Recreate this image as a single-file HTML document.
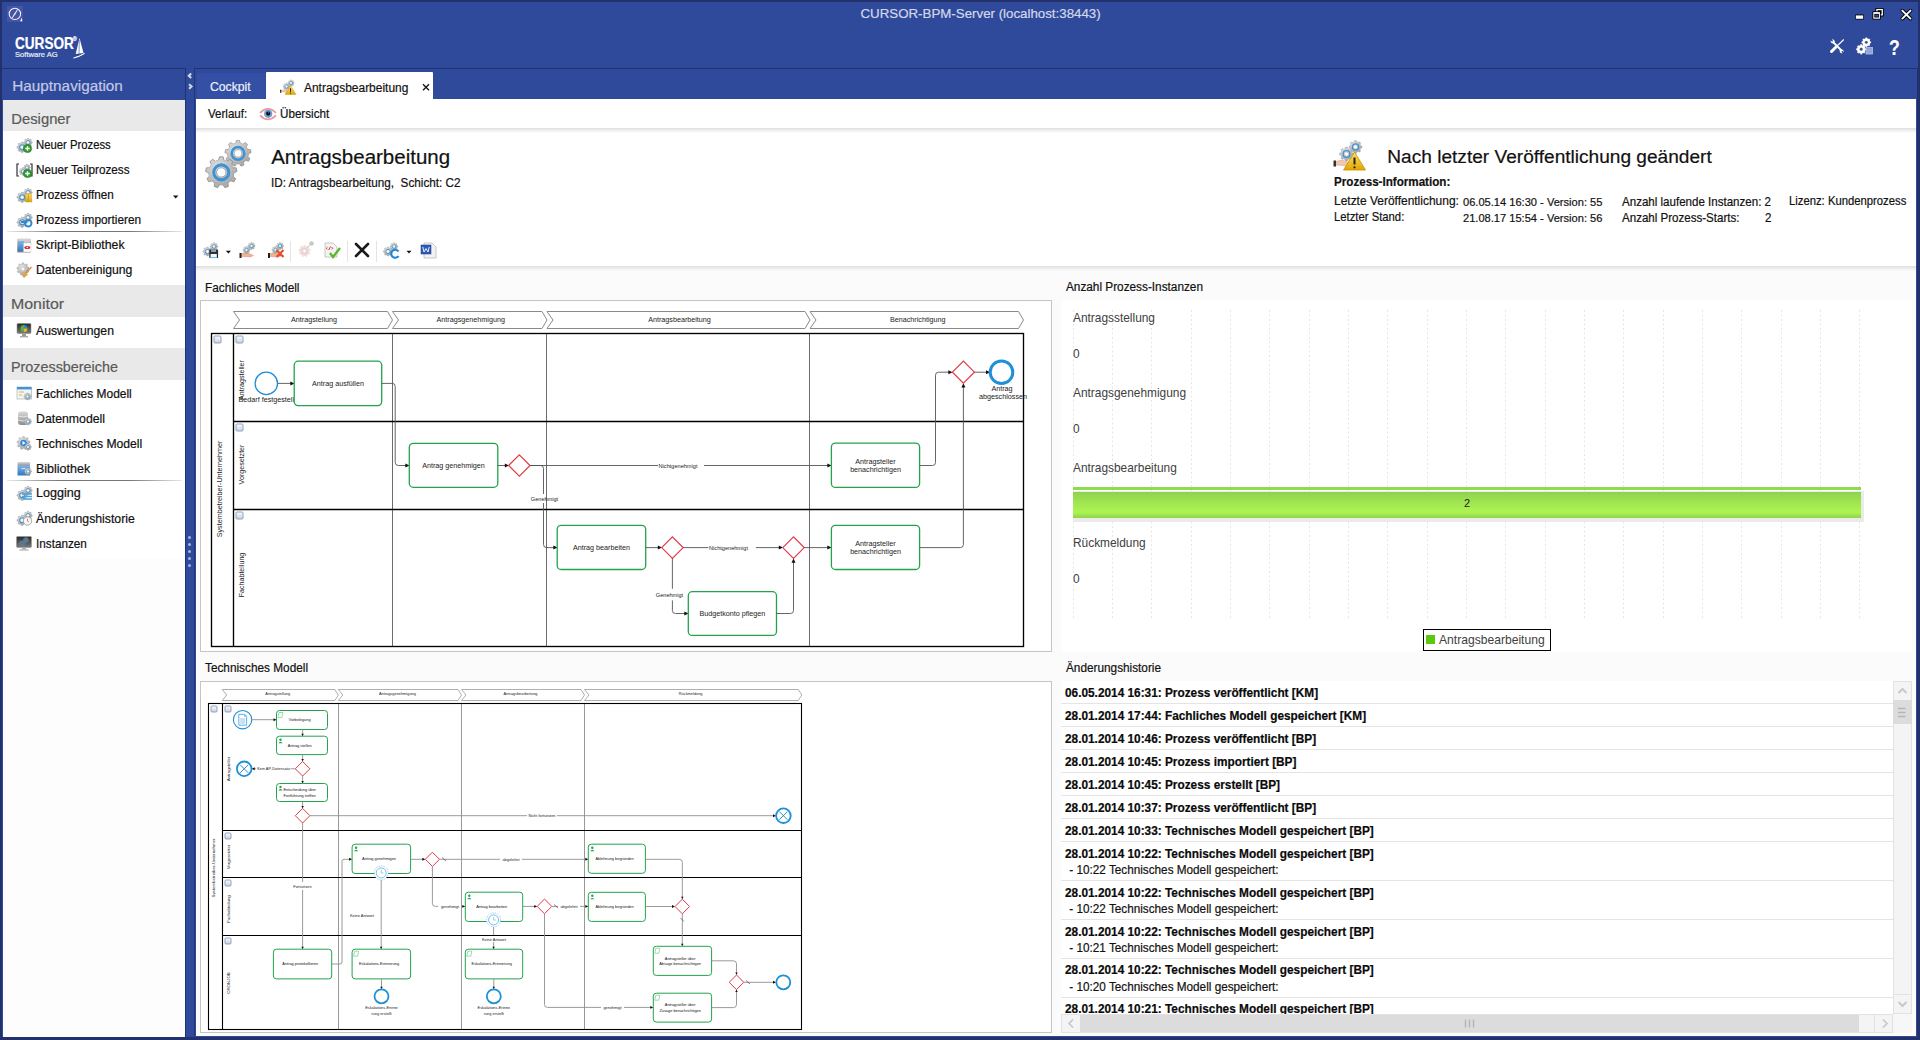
<!DOCTYPE html><html><head><meta charset="utf-8"><style>
html,body{margin:0;padding:0}
body{width:1920px;height:1040px;overflow:hidden;position:relative;background:#22316b;font-family:"Liberation Sans",sans-serif}
.t{position:absolute;white-space:pre;line-height:1;-webkit-text-stroke:0.2px currentColor}
.r{position:absolute}
svg{position:absolute;overflow:visible}
</style></head><body><div class="r" style="left:2px;top:2px;width:1916px;height:1035px;background:#2f4a9b"></div><div class="r" style="left:1917px;top:69px;width:3px;height:971px;background:#22316b"></div><div class="t" style="left:860.5px;top:6.64px;font-size:13.30px;color:#d3d8ea;font-weight:400;">CURSOR-BPM-Server (localhost:38443)</div><svg style="left:0;top:0" width="40" height="30"><rect x="7" y="6" width="16" height="16" fill="#4654a6"/><circle cx="14.9" cy="13.9" r="5.7" fill="none" stroke="#f4f4fa" stroke-width="1.05"/><path d="M12.2,18 Q14.2,13.4 17.6,9.6 Q15.6,14.2 12.2,18Z" fill="#fff" stroke="#fff" stroke-width="0.5"/><path d="M20.2,21.3 L22.4,21.3 L21.6,17.6Z" fill="#fff"/></svg><svg style="left:0;top:0" width="1920" height="30"><rect x="1855" y="14.6" width="9" height="5" rx="0.8" fill="#000"/><rect x="1855.8" y="15.4" width="7.4" height="3.4" fill="#fff"/><rect x="1875.4" y="8" width="8.4" height="8.4" rx="0.6" fill="#000"/><rect x="1876.3" y="8.9" width="6.6" height="6.6" fill="#fff"/><rect x="1877.6" y="10.2" width="4" height="4" fill="#000"/><rect x="1872.4" y="11.2" width="8.4" height="8.4" rx="0.6" fill="#000"/><rect x="1873.3" y="12.1" width="6.6" height="6.6" fill="#fff"/><rect x="1874.3" y="13.9" width="4.6" height="3.6" fill="#000"/><rect x="1875.1" y="14.7" width="3" height="2" fill="#2f4a9b"/><path d="M1902.3,10.6 L1910.5,18.6 M1910.5,10.6 L1902.3,18.6" stroke="#000" stroke-width="3.6" stroke-linecap="round"/><path d="M1902.3,10.6 L1910.5,18.6 M1910.5,10.6 L1902.3,18.6" stroke="#fff" stroke-width="1.9" stroke-linecap="round"/></svg><div class="t" style="left:14.5px;top:35.74px;font-size:15.90px;color:#fff;font-weight:700;transform:scaleX(0.8550);transform-origin:0 0;">CURSOR</div><div class="t" style="left:72.8px;top:36.84px;font-size:5.50px;color:#fff;font-weight:400;">®</div><div class="t" style="left:15.0px;top:51.47px;font-size:7.60px;color:#e8ebf5;font-weight:400;">Software AG</div><svg style="left:70px;top:35px" width="20" height="26"><path d="M9.5,3 L5.7,18.9 L13.5,18 Z" fill="#fff"/><path d="M9.3,5 L9,18.6" stroke="#2f4a9b" stroke-width="0.6"/><path d="M3.6,23 Q9,21.5 14.5,18.5 Q9,22 3.6,23Z" fill="#fff" stroke="#fff" stroke-width="0.8"/></svg><svg style="left:1826px;top:34px" width="80" height="24"><path d="M5.5,17.5 L9.5,13.5" stroke="#fff" stroke-width="3" stroke-linecap="round"/><path d="M9,14 L17.8,5.5" stroke="#fff" stroke-width="1.1"/><path d="M7,8 L15.5,16.5" stroke="#fff" stroke-width="1.8"/><path d="M4.5,6.5 Q4.5,9.5 7.5,9.5 L8.8,8.2 Q8.8,5.2 5.8,5.2 L7,6.8 L6.2,7.8Z" fill="#fff"/><path d="M17.8,18.2 Q17.8,15.2 14.8,15.2 L13.6,16.4 Q13.6,19.4 16.6,19.4 L15.4,17.8 L16.2,16.8Z" fill="#fff"/></svg><svg style="left:0;top:0" width="1920" height="80"><path d="M1865.44,38.72L1865.69,37.74L1866.91,37.74L1867.16,38.72L1868.22,39.16L1869.09,38.64L1869.96,39.51L1869.44,40.38L1869.88,41.44L1870.86,41.69L1870.86,42.91L1869.88,43.16L1869.44,44.22L1869.96,45.09L1869.09,45.96L1868.22,45.44L1867.16,45.88L1866.91,46.86L1865.69,46.86L1865.44,45.88L1864.38,45.44L1863.51,45.96L1862.64,45.09L1863.16,44.22L1862.72,43.16L1861.74,42.91L1861.74,41.69L1862.72,41.44L1863.16,40.38L1862.64,39.51L1863.51,38.64L1864.38,39.16Z" fill="#fff" stroke="#fff" stroke-width="0.35"/><circle cx="1866.30" cy="42.30" r="3.68" fill="#fff"/><circle cx="1866.30" cy="42.30" r="1.38" fill="#2f4a9b" stroke="#9a9a9a" stroke-width="0.28"/><path d="M1860.28,45.49L1860.55,44.44L1861.85,44.44L1862.12,45.49L1863.25,45.96L1864.17,45.40L1865.10,46.33L1864.54,47.25L1865.01,48.38L1866.06,48.65L1866.06,49.95L1865.01,50.22L1864.54,51.35L1865.10,52.27L1864.17,53.20L1863.25,52.64L1862.12,53.11L1861.85,54.16L1860.55,54.16L1860.28,53.11L1859.15,52.64L1858.23,53.20L1857.30,52.27L1857.86,51.35L1857.39,50.22L1856.34,49.95L1856.34,48.65L1857.39,48.38L1857.86,47.25L1857.30,46.33L1858.23,45.40L1859.15,45.96Z" fill="#fff" stroke="#fff" stroke-width="0.35"/><circle cx="1861.20" cy="49.30" r="3.92" fill="#fff"/><circle cx="1861.20" cy="49.30" r="1.47" fill="#2f4a9b" stroke="#9a9a9a" stroke-width="0.29"/><rect x="1866" y="47.5" width="6.5" height="6.5" fill="#8f9ed6" stroke="#c5cdee" stroke-width="0.7"/><path d="M1867,50 L1871.5,50 M1867,52 L1871.5,52" stroke="#aab5e2" stroke-width="0.6"/></svg><div class="t" style="left:1888.6px;top:36.58px;font-size:22.00px;color:#fff;font-weight:700;transform:scaleX(0.8000);transform-origin:0 0;">?</div><div class="r" style="left:2px;top:68px;width:184px;height:1px;background:#22336e"></div><div class="r" style="left:194px;top:68px;width:1724px;height:1px;background:#22336e"></div><div class="r" style="left:3px;top:69px;width:182px;height:968px;background:#fdfdfd"></div><div class="r" style="left:3px;top:69px;width:182px;height:31px;background:#2f4a9b"></div><div class="r" style="left:185px;top:69px;width:1px;height:968px;background:#1f3272"></div><div class="t" style="left:12.3px;top:77.95px;font-size:15.30px;color:#c3c9e6;font-weight:400;">Hauptnavigation</div><div class="r" style="left:3px;top:100px;width:182px;height:458px;background:#fff"></div><div class="r" style="left:3px;top:100px;width:182px;height:31px;background:#e9e9e9"></div><div class="t" style="left:11.3px;top:112.07px;font-size:14.80px;color:#595959;font-weight:400;">Designer</div><div class="r" style="left:3px;top:285px;width:182px;height:32px;background:#e9e9e9"></div><div class="t" style="left:11.3px;top:296.97px;font-size:14.80px;color:#595959;font-weight:400;transform:scaleX(1.0750);transform-origin:0 0;">Monitor</div><div class="r" style="left:3px;top:348px;width:182px;height:32px;background:#e9e9e9"></div><div class="t" style="left:11.3px;top:360.07px;font-size:14.80px;color:#595959;font-weight:400;transform:scaleX(0.9700);transform-origin:0 0;">Prozessbereiche</div><div class="t" style="left:35.8px;top:139.30px;font-size:12.29px;color:#111;font-weight:400;transform:scaleX(0.9204);transform-origin:0 0;">Neuer Prozess</div><div class="t" style="left:35.8px;top:164.40px;font-size:12.29px;color:#111;font-weight:400;transform:scaleX(0.9536);transform-origin:0 0;">Neuer Teilprozess</div><div class="t" style="left:35.8px;top:189.40px;font-size:12.29px;color:#111;font-weight:400;transform:scaleX(0.9526);transform-origin:0 0;">Prozess öffnen</div><div class="t" style="left:35.8px;top:214.40px;font-size:12.29px;color:#111;font-weight:400;transform:scaleX(0.9621);transform-origin:0 0;">Prozess importieren</div><div class="t" style="left:35.8px;top:239.40px;font-size:12.29px;color:#111;font-weight:400;">Skript-Bibliothek</div><div class="t" style="left:35.8px;top:264.30px;font-size:12.29px;color:#111;font-weight:400;transform:scaleX(0.9943);transform-origin:0 0;">Datenbereinigung</div><div class="t" style="left:35.8px;top:324.70px;font-size:12.29px;color:#111;font-weight:400;transform:scaleX(0.9924);transform-origin:0 0;">Auswertungen</div><div class="t" style="left:35.8px;top:387.90px;font-size:12.29px;color:#111;font-weight:400;transform:scaleX(0.9744);transform-origin:0 0;">Fachliches Modell</div><div class="t" style="left:35.8px;top:412.50px;font-size:12.29px;color:#111;font-weight:400;transform:scaleX(1.0009);transform-origin:0 0;">Datenmodell</div><div class="t" style="left:35.8px;top:437.50px;font-size:12.29px;color:#111;font-weight:400;transform:scaleX(0.9915);transform-origin:0 0;">Technisches Modell</div><div class="t" style="left:35.8px;top:462.50px;font-size:12.29px;color:#111;font-weight:400;transform:scaleX(1.0171);transform-origin:0 0;">Bibliothek</div><div class="t" style="left:35.8px;top:487.40px;font-size:12.29px;color:#111;font-weight:400;transform:scaleX(1.0237);transform-origin:0 0;">Logging</div><div class="t" style="left:35.8px;top:512.50px;font-size:12.29px;color:#111;font-weight:400;transform:scaleX(0.9981);transform-origin:0 0;">Änderungshistorie</div><div class="t" style="left:35.8px;top:537.50px;font-size:12.29px;color:#111;font-weight:400;transform:scaleX(0.9555);transform-origin:0 0;">Instanzen</div><div class="r" style="left:7px;top:231px;width:175px;height:1px;background:linear-gradient(90deg,rgba(140,140,140,0.2),#777 30%,#777 70%,rgba(140,140,140,0.2))"></div><div class="r" style="left:7px;top:480px;width:175px;height:1px;background:linear-gradient(90deg,rgba(140,140,140,0.2),#777 30%,#777 70%,rgba(140,140,140,0.2))"></div><svg style="left:170px;top:192px" width="10" height="10"><path d="M3,3.6 L8.4,3.6 L5.7,6.6Z" fill="#111"/></svg><svg style="left:182px;top:66px" width="18" height="30"><path d="M9.2,7.5 L6.8,9.7 L9.2,12" stroke="#d3d6e6" stroke-width="2.1" fill="none" stroke-linejoin="miter"/><path d="M7.1,18.2 L9.5,20.5 L7.1,22.8" stroke="#d3d6e6" stroke-width="2.1" fill="none"/></svg><div class="r" style="left:187.6px;top:536.0px;width:3px;height:3px;border-radius:50%;background:#aab3da"></div><div class="r" style="left:187.6px;top:543.1px;width:3px;height:3px;border-radius:50%;background:#aab3da"></div><div class="r" style="left:187.6px;top:550.2px;width:3px;height:3px;border-radius:50%;background:#aab3da"></div><div class="r" style="left:187.6px;top:557.3px;width:3px;height:3px;border-radius:50%;background:#aab3da"></div><div class="r" style="left:187.6px;top:564.4px;width:3px;height:3px;border-radius:50%;background:#aab3da"></div><div class="r" style="left:194px;top:69px;width:1px;height:968px;background:#24367a"></div><div class="r" style="left:197px;top:73px;width:68px;height:26px;background:#3350a5"></div><div class="t" style="left:210.3px;top:81.30px;font-size:12.87px;color:#eef1fa;font-weight:400;transform:scaleX(0.9479);transform-origin:0 0;">Cockpit</div><div class="r" style="left:266px;top:72px;width:167px;height:27px;background:#fff;border-radius:1px 1px 0 0"></div><div class="t" style="left:304.4px;top:82.03px;font-size:12.61px;color:#111;font-weight:400;transform:scaleX(0.9479);transform-origin:0 0;">Antragsbearbeitung</div><svg style="left:420px;top:81px" width="12" height="12"><path d="M3,3.3 L9,9.3 M9,3.3 L3,9.3" stroke="#111" stroke-width="1.3"/></svg><div class="r" style="left:196px;top:99px;width:1720px;height:937px;background:#fbfbfb"></div><div class="r" style="left:196px;top:99px;width:1720px;height:29px;background:#fff"></div><div class="r" style="left:196px;top:128px;width:1720px;height:5px;background:linear-gradient(#dedede,#e8e8e8 25%,#fff)"></div><div class="t" style="left:208.2px;top:108.48px;font-size:12.20px;color:#111;font-weight:400;transform:scaleX(0.9479);transform-origin:0 0;">Verlauf:</div><div class="t" style="left:280.3px;top:108.40px;font-size:12.29px;color:#111;font-weight:400;transform:scaleX(0.9479);transform-origin:0 0;">Übersicht</div><div class="r" style="left:196px;top:133px;width:1720px;height:133px;background:#fff"></div><div class="r" style="left:196px;top:266px;width:1720px;height:5px;background:linear-gradient(#dedede,#e6e6e6 25%,#fbfbfb)"></div><div class="t" style="left:271.2px;top:146.75px;font-size:20.50px;color:#111;font-weight:400;">Antragsbearbeitung</div><div class="t" style="left:271.2px;top:176.53px;font-size:12.36px;color:#111;font-weight:400;transform:scaleX(0.9479);transform-origin:0 0;">ID: Antragsbearbeitung,  Schicht: C2</div><div class="t" style="left:1387.3px;top:146.93px;font-size:19.10px;color:#111;font-weight:400;">Nach letzter Veröffentlichung geändert</div><div class="t" style="left:1334.2px;top:176.20px;font-size:12.28px;color:#111;font-weight:700;transform:scaleX(0.9479);transform-origin:0 0;">Prozess-Information:</div><div class="t" style="left:1334.2px;top:195.30px;font-size:12.64px;color:#111;font-weight:400;transform:scaleX(0.9479);transform-origin:0 0;">Letzte Veröffentlichung:</div><div class="t" style="left:1463.0px;top:196.09px;font-size:11.71px;color:#111;font-weight:400;transform:scaleX(0.9479);transform-origin:0 0;">06.05.14 16:30 - Version: 55</div><div class="t" style="left:1334.2px;top:212.01px;font-size:11.92px;color:#111;font-weight:400;transform:scaleX(0.9479);transform-origin:0 0;">Letzter Stand:</div><div class="t" style="left:1463.0px;top:212.19px;font-size:11.71px;color:#111;font-weight:400;transform:scaleX(0.9479);transform-origin:0 0;">21.08.17 15:54 - Version: 56</div><div class="t" style="left:1621.5px;top:195.69px;font-size:12.19px;color:#111;font-weight:400;transform:scaleX(0.9479);transform-origin:0 0;">Anzahl laufende Instanzen: 2</div><div class="t" style="left:1621.5px;top:211.79px;font-size:12.19px;color:#111;font-weight:400;transform:scaleX(0.9479);transform-origin:0 0;">Anzahl Prozess-Starts:</div><div class="t" style="left:1764.8px;top:211.79px;font-size:12.19px;color:#111;font-weight:400;transform:scaleX(0.9479);transform-origin:0 0;">2</div><div class="t" style="left:1789.1px;top:195.92px;font-size:11.91px;color:#111;font-weight:400;transform:scaleX(0.9479);transform-origin:0 0;">Lizenz: Kundenprozess</div><div class="t" style="left:205.0px;top:281.55px;font-size:12.46px;color:#111;font-weight:400;transform:scaleX(0.9479);transform-origin:0 0;">Fachliches Modell</div><div class="t" style="left:1066.0px;top:281.16px;font-size:12.45px;color:#111;font-weight:400;transform:scaleX(0.9479);transform-origin:0 0;">Anzahl Prozess-Instanzen</div><div class="t" style="left:205.0px;top:662.15px;font-size:12.46px;color:#111;font-weight:400;transform:scaleX(0.9479);transform-origin:0 0;">Technisches Modell</div><div class="t" style="left:1066.0px;top:662.16px;font-size:12.45px;color:#111;font-weight:400;transform:scaleX(0.9479);transform-origin:0 0;">Änderungshistorie</div><svg style="left:0;top:0" width="1920" height="1040" font-family="Liberation Sans"><defs><linearGradient id="cbg" x1="0" y1="0" x2="0" y2="1"><stop offset="0" stop-color="#fdfdfe"/><stop offset="1" stop-color="#c6d0e2"/></linearGradient></defs><rect x="200.5" y="300.5" width="851" height="351" fill="#fff" stroke="#c4c4c4" stroke-width="1"/><path d="M233.5,311.5 L387.5,311.5 L392.5,320.0 L387.5,328.5 L233.5,328.5 L239.5,320.0Z" fill="#fff" stroke="#8a8a8a" stroke-width="1"/><text x="314.0" y="321.71999999999997" font-size="7.2" text-anchor="middle" fill="#222" >Antragstellung</text><path d="M392.5,311.5 L542,311.5 L547,320.0 L542,328.5 L392.5,328.5 L398.5,320.0Z" fill="#fff" stroke="#8a8a8a" stroke-width="1"/><text x="470.75" y="321.71999999999997" font-size="7.2" text-anchor="middle" fill="#222" >Antragsgenehmigung</text><path d="M547,311.5 L805,311.5 L810,320.0 L805,328.5 L547,328.5 L553,320.0Z" fill="#fff" stroke="#8a8a8a" stroke-width="1"/><text x="679.5" y="321.71999999999997" font-size="7.2" text-anchor="middle" fill="#222" >Antragsbearbeitung</text><path d="M810,311.5 L1018.5,311.5 L1023.5,320.0 L1018.5,328.5 L810,328.5 L816,320.0Z" fill="#fff" stroke="#8a8a8a" stroke-width="1"/><text x="917.75" y="321.71999999999997" font-size="7.2" text-anchor="middle" fill="#222" >Benachrichtigung</text><path d="M392.5,333.5 L392.5,646.5" fill="none" stroke="#6b6b6b" stroke-width="1"/><path d="M546.5,333.5 L546.5,646.5" fill="none" stroke="#6b6b6b" stroke-width="1"/><path d="M809.5,333.5 L809.5,646.5" fill="none" stroke="#6b6b6b" stroke-width="1"/><rect x="211.5" y="333.5" width="812" height="313" fill="none" stroke="#000" stroke-width="1.35"/><path d="M233.5,333.5 L233.5,646.5" fill="none" stroke="#000" stroke-width="1.35"/><path d="M233.5,421.5 L1023.5,421.5 M233.5,509.5 L1023.5,509.5" fill="none" stroke="#000" stroke-width="1.35"/><rect x="214.0" y="336.0" width="7" height="7" rx="1" fill="url(#cbg)" stroke="#7d8fae" stroke-width="0.8"/><rect x="236.0" y="336.0" width="7" height="7" rx="1" fill="url(#cbg)" stroke="#7d8fae" stroke-width="0.8"/><rect x="236.0" y="424.0" width="7" height="7" rx="1" fill="url(#cbg)" stroke="#7d8fae" stroke-width="0.8"/><rect x="236.0" y="512.0" width="7" height="7" rx="1" fill="url(#cbg)" stroke="#7d8fae" stroke-width="0.8"/><text x="0" y="0" font-size="7.2" text-anchor="middle" fill="#222" transform="translate(219.8,489) rotate(-90)" dominant-baseline="central">Systembetreiber-Unternehmer</text><text x="0" y="0" font-size="7.1" text-anchor="middle" fill="#222" transform="translate(241.5,380) rotate(-90)" dominant-baseline="central">Antragsteller</text><text x="0" y="0" font-size="7.1" text-anchor="middle" fill="#222" transform="translate(241.5,464.5) rotate(-90)" dominant-baseline="central">Vorgesetzter</text><text x="0" y="0" font-size="7.1" text-anchor="middle" fill="#222" transform="translate(241.5,575) rotate(-90)" dominant-baseline="central">Fachabteilung</text><circle cx="266.3" cy="383.4" r="11.2" fill="#fff" stroke="#1f8fd8" stroke-width="1.3"/><text x="238.5" y="402" font-size="7.2" text-anchor="start" fill="#222" >Bedarf festgestell</text><path d="M277.5,383.4 L292,383.4" fill="none" stroke="#555" stroke-width="0.9"/><path d="M294.5,383.4 L290.3,381.38399999999996 L290.3,385.416Z" fill="#111"/><rect x="294.2" y="361.2" width="87.50" height="44.40" rx="4" fill="#fff" stroke="#22a34e" stroke-width="1.3"/><text x="338" y="385.8" font-size="7.2" text-anchor="middle" fill="#222" >Antrag ausfüllen</text><path d="M381.7,383.4 L392.5,383.4 Q395.2,383.4 395.2,386.5 L395.2,462.5 Q395.2,465.5 398.5,465.5 L407,465.5" fill="none" stroke="#555" stroke-width="0.9"/><path d="M409.5,465.5 L405.3,463.484 L405.3,467.516Z" fill="#111"/><rect x="409.3" y="443.3" width="88.50" height="44.00" rx="4" fill="#fff" stroke="#22a34e" stroke-width="1.3"/><text x="453.5" y="467.9" font-size="7.2" text-anchor="middle" fill="#222" >Antrag genehmigen</text><path d="M497.8,465.5 L506.5,465.5" fill="none" stroke="#555" stroke-width="0.9"/><path d="M509,465.5 L504.8,463.484 L504.8,467.516Z" fill="#111"/><path d="M508.59999999999997,465.5 L519.3,454.8 L530.0,465.5 L519.3,476.2Z" fill="#fff" stroke="#e23a44" stroke-width="1.2"/><path d="M530,465.5 L658,465.5 M704,465.5 L829,465.5" fill="none" stroke="#555" stroke-width="0.9"/><path d="M831.5,465.5 L827.3,463.484 L827.3,467.516Z" fill="#111"/><text x="678" y="467.5" font-size="5.6" text-anchor="middle" fill="#222" >Nichtgenehmigt</text><path d="M530,465.5 L540.5,465.5 Q543.5,465.5 543.5,468.5 L543.5,494 M543.5,503 L543.5,544.5 Q543.5,547.6 546.5,547.6 L555,547.6" fill="none" stroke="#555" stroke-width="0.9"/><path d="M557.5,547.6 L553.3,545.5840000000001 L553.3,549.616Z" fill="#111"/><text x="544.5" y="501" font-size="5.6" text-anchor="middle" fill="#222" >Genehmigt</text><rect x="557.2" y="525.3" width="88.50" height="44.20" rx="4" fill="#fff" stroke="#22a34e" stroke-width="1.3"/><text x="601.5" y="550" font-size="7.2" text-anchor="middle" fill="#222" >Antrag bearbeiten</text><path d="M645.7,547.6 L659.5,547.6" fill="none" stroke="#555" stroke-width="0.9"/><path d="M662,547.6 L657.8,545.5840000000001 L657.8,549.616Z" fill="#111"/><path d="M661.6999999999999,547.6 L672.4,536.9 L683.1,547.6 L672.4,558.3000000000001Z" fill="#fff" stroke="#e23a44" stroke-width="1.2"/><path d="M683.1,547.6 L708.4,547.6 M755.8,547.6 L780.5,547.6" fill="none" stroke="#555" stroke-width="0.9"/><path d="M783,547.6 L778.8,545.5840000000001 L778.8,549.616Z" fill="#111"/><text x="728.5" y="549.6" font-size="5.6" text-anchor="middle" fill="#222" >Nichtgenehmigt</text><path d="M672.4,558.3 L672.4,588.8 M672.4,600.4 L672.4,610.5 Q672.4,613.5 675.5,613.5 L686,613.5" fill="none" stroke="#555" stroke-width="0.9"/><path d="M688.5,613.5 L684.3,611.484 L684.3,615.516Z" fill="#111"/><text x="669.5" y="597" font-size="5.6" text-anchor="middle" fill="#222" >Genehmigt</text><rect x="688.3" y="591.7" width="88.20" height="43.70" rx="4" fill="#fff" stroke="#22a34e" stroke-width="1.3"/><text x="732.4" y="616" font-size="7.2" text-anchor="middle" fill="#222" >Budgetkonto pflegen</text><path d="M776.5,613.5 L790.5,613.5 Q793.5,613.5 793.5,610.5 L793.5,562" fill="none" stroke="#555" stroke-width="0.9"/><path d="M793.5,558.5 L791.484,562.7 L795.516,562.7Z" fill="#111"/><path d="M782.8,547.6 L793.5,536.9 L804.2,547.6 L793.5,558.3000000000001Z" fill="#fff" stroke="#e23a44" stroke-width="1.2"/><path d="M804.2,547.6 L829,547.6" fill="none" stroke="#555" stroke-width="0.9"/><path d="M831.5,547.6 L827.3,545.5840000000001 L827.3,549.616Z" fill="#111"/><rect x="831.4" y="525.3" width="88.20" height="44.20" rx="4" fill="#fff" stroke="#22a34e" stroke-width="1.3"/><text x="875.5" y="546" font-size="7.2" text-anchor="middle" fill="#222" >Antragsteller</text><text x="875.5" y="554.2" font-size="7.2" text-anchor="middle" fill="#222" >benachrichtigen</text><rect x="831.4" y="443.1" width="88.20" height="44.30" rx="4" fill="#fff" stroke="#22a34e" stroke-width="1.3"/><text x="875.5" y="463.8" font-size="7.2" text-anchor="middle" fill="#222" >Antragsteller</text><text x="875.5" y="472" font-size="7.2" text-anchor="middle" fill="#222" >benachrichtigen</text><path d="M919.6,547.6 L960.4,547.6 Q963.4,547.6 963.4,544.5 L963.4,387" fill="none" stroke="#555" stroke-width="0.9"/><path d="M963.4,383.3 L961.384,387.5 L965.4159999999999,387.5Z" fill="#111"/><path d="M919.6,465.5 L932.5,465.5 Q935.5,465.5 935.5,462.5 L935.5,375.2 Q935.5,372.2 938.5,372.2 L950,372.2" fill="none" stroke="#555" stroke-width="0.9"/><path d="M952.5,372.2 L948.3,370.18399999999997 L948.3,374.216Z" fill="#111"/><path d="M952.4,372.2 L963.4,361.2 L974.4,372.2 L963.4,383.2Z" fill="#fff" stroke="#e23a44" stroke-width="1.2"/><path d="M974.4,372.2 L987.5,372.2" fill="none" stroke="#555" stroke-width="0.9"/><path d="M990.2,372.2 L986.0,370.18399999999997 L986.0,374.216Z" fill="#111"/><circle cx="1001.5" cy="372.2" r="11.3" fill="#fff" stroke="#1f8fd8" stroke-width="3"/><text x="1002" y="390.6" font-size="7.2" text-anchor="middle" fill="#222" >Antrag</text><text x="1003" y="398.5" font-size="7.2" text-anchor="middle" fill="#222" >abgeschlossen</text><rect x="200.5" y="681.5" width="851" height="351" fill="#fff" stroke="#c4c4c4" stroke-width="1"/><path d="M222.2,689.5 L334.8,689.5 L338.3,695.0 L334.8,700.5 L222.2,700.5 L226.7,695.0Z" fill="#fff" stroke="#9a9a9a" stroke-width="0.8"/><text x="277.75" y="695.365" font-size="3.9" text-anchor="middle" fill="#222" >Antragstellung</text><path d="M338.3,689.5 L458.0,689.5 L461.5,695.0 L458.0,700.5 L338.3,700.5 L342.8,695.0Z" fill="#fff" stroke="#9a9a9a" stroke-width="0.8"/><text x="397.4" y="695.365" font-size="3.9" text-anchor="middle" fill="#222" >Antragsgenehmigung</text><path d="M461.5,689.5 L581.0,689.5 L584.5,695.0 L581.0,700.5 L461.5,700.5 L466.0,695.0Z" fill="#fff" stroke="#9a9a9a" stroke-width="0.8"/><text x="520.5" y="695.365" font-size="3.9" text-anchor="middle" fill="#222" >Antragsbearbeitung</text><path d="M584.5,689.5 L798.3,689.5 L801.8,695.0 L798.3,700.5 L584.5,700.5 L589.0,695.0Z" fill="#fff" stroke="#9a9a9a" stroke-width="0.8"/><text x="690.65" y="695.365" font-size="3.9" text-anchor="middle" fill="#222" >Rückmeldung</text><path d="M338.5,703.5 L338.5,1029.5" fill="none" stroke="#8c8c8c" stroke-width="0.9"/><path d="M461.5,703.5 L461.5,1029.5" fill="none" stroke="#8c8c8c" stroke-width="0.9"/><path d="M584.5,703.5 L584.5,1029.5" fill="none" stroke="#8c8c8c" stroke-width="0.9"/><rect x="208.5" y="703.5" width="593" height="326" fill="none" stroke="#000" stroke-width="1.1"/><path d="M222.5,703.5 L222.5,1029.5" fill="none" stroke="#000" stroke-width="1.1"/><path d="M222.5,830.5 L801.5,830.5 M222.5,877.5 L801.5,877.5 M222.5,935.5 L801.5,935.5" fill="none" stroke="#000" stroke-width="1.1"/><rect x="211.0" y="706.0" width="6" height="6" rx="1" fill="url(#cbg)" stroke="#7d8fae" stroke-width="0.8"/><rect x="225.0" y="706.0" width="6" height="6" rx="1" fill="url(#cbg)" stroke="#7d8fae" stroke-width="0.8"/><rect x="225.0" y="833.0" width="6" height="6" rx="1" fill="url(#cbg)" stroke="#7d8fae" stroke-width="0.8"/><rect x="225.0" y="880.0" width="6" height="6" rx="1" fill="url(#cbg)" stroke="#7d8fae" stroke-width="0.8"/><rect x="225.0" y="938.0" width="6" height="6" rx="1" fill="url(#cbg)" stroke="#7d8fae" stroke-width="0.8"/><text x="0" y="0" font-size="4.4" text-anchor="middle" fill="#222" transform="translate(213,868) rotate(-90)" dominant-baseline="central">Systembetreiber-Unternehmer</text><text x="0" y="0" font-size="4.4" text-anchor="middle" fill="#222" transform="translate(228,769) rotate(-90)" dominant-baseline="central">Antragsteller</text><text x="0" y="0" font-size="4.4" text-anchor="middle" fill="#222" transform="translate(228,857) rotate(-90)" dominant-baseline="central">Vorgesetzter</text><text x="0" y="0" font-size="4.4" text-anchor="middle" fill="#222" transform="translate(228,909) rotate(-90)" dominant-baseline="central">Fachabteilung</text><text x="0" y="0" font-size="4.4" text-anchor="middle" fill="#222" transform="translate(228,983) rotate(-90)" dominant-baseline="central">CRONJOB</text><circle cx="242.6" cy="719.7" r="9.2" fill="#fff" stroke="#1f8fd8" stroke-width="1.1"/><path d="M238.8,714.3 L244.6,714.3 L246.6,716.3 L246.6,725.2 L238.8,725.2Z" fill="#fff" stroke="#3a9ae0" stroke-width="0.8"/><path d="M244.3,714.5 L244.3,716.6 L246.4,716.6Z" fill="#3a9ae0"/><path d="M240.2,719 L245.2,719 M240.2,721 L245.2,721 M240.2,723 L245.2,723" stroke="#3a9ae0" stroke-width="0.6"/><rect x="276.5" y="710.5" width="51.00" height="19.00" rx="3" fill="#fff" stroke="#22a34e" stroke-width="1.0"/><text x="299.7" y="721.2" font-size="3.9" text-anchor="middle" fill="#111" >Vorbelegung</text><path d="M279.0,712.5 L283.0,712.5 L282.0,717.5 L278.0,717.5Z" fill="none" stroke="#5cc27c" stroke-width="0.6"/><path d="M251.8,719.7 L274.5,719.7" fill="none" stroke="#8f8f8f" stroke-width="0.9"/><path d="M276.5,719.7 L273.5,718.26 L273.5,721.1400000000001Z" fill="#111"/><rect x="276.5" y="736.2" width="51.00" height="18.40" rx="3" fill="#fff" stroke="#22a34e" stroke-width="1.0"/><text x="299.7" y="746.6000000000001" font-size="3.9" text-anchor="middle" fill="#111" >Antrag stellen</text><circle cx="280.5" cy="739.7" r="1.2" fill="#22a34e"/><path d="M278.5,743.2 Q280.5,740.4000000000001 282.5,743.2Z" fill="#22a34e"/><path d="M302.6,729.5 L302.6,734.5" fill="none" stroke="#8f8f8f" stroke-width="0.9"/><path d="M302.6,736.2 L301.40000000000003,733.7 L303.8,733.7Z" fill="#111"/><path d="M302.6,754.6 L302.6,759.5" fill="none" stroke="#8f8f8f" stroke-width="0.9"/><path d="M302.6,761.5 L301.40000000000003,759.0 L303.8,759.0Z" fill="#111"/><path d="M295.3,768.8 L302.6,761.5 L309.90000000000003,768.8 L302.6,776.0999999999999Z" fill="#fff" stroke="#e23a44" stroke-width="1.0"/><path d="M295.3,768.8 L290.5,768.8 M251.5,768.8 L256,768.8" fill="none" stroke="#8f8f8f" stroke-width="0.9"/><path d="M251.7,768.8 L254.7,767.3599999999999 L254.7,770.24Z" fill="#111"/><text x="273.5" y="770.3" font-size="3.9" text-anchor="middle" fill="#222" >Kein AP-Datensatz</text><circle cx="244.2" cy="768.8" r="7.3" fill="#fff" stroke="#1f8fd8" stroke-width="1.8"/><path d="M240.2,764.8 L248.2,772.8 M248.2,764.8 L240.2,772.8" fill="none" stroke="#1f8fd8" stroke-width="1.0"/><path d="M302.6,776.1 L302.6,781.5" fill="none" stroke="#8f8f8f" stroke-width="0.9"/><path d="M302.6,783.5 L301.40000000000003,781.0 L303.8,781.0Z" fill="#111"/><rect x="276.5" y="783.5" width="51.00" height="18.00" rx="3" fill="#fff" stroke="#22a34e" stroke-width="1.0"/><text x="299.7" y="791.2" font-size="3.9" text-anchor="middle" fill="#111" >Entscheidung über</text><text x="299.7" y="796.8" font-size="3.9" text-anchor="middle" fill="#111" >Fortführung treffen</text><circle cx="280.5" cy="787.0" r="1.2" fill="#22a34e"/><path d="M278.5,790.5 Q280.5,787.7 282.5,790.5Z" fill="#22a34e"/><path d="M302.6,801.5 L302.6,806.5" fill="none" stroke="#8f8f8f" stroke-width="0.9"/><path d="M302.6,808.4 L301.40000000000003,805.9 L303.8,805.9Z" fill="#111"/><path d="M295.3,815.7 L302.6,808.4000000000001 L309.90000000000003,815.7 L302.6,823.0Z" fill="#fff" stroke="#e23a44" stroke-width="1.0"/><path d="M309.9,815.7 L527,815.7 M557,815.7 L774,815.7" fill="none" stroke="#8f8f8f" stroke-width="0.9"/><path d="M776,815.7 L773,814.26 L773,817.1400000000001Z" fill="#111"/><text x="542" y="817.3" font-size="3.9" text-anchor="middle" fill="#222" >Nicht fortsetzen</text><circle cx="783.4" cy="815.7" r="7.3" fill="#fff" stroke="#1f8fd8" stroke-width="1.8"/><path d="M779.4,811.7 L787.4,819.7 M787.4,811.7 L779.4,819.7" fill="none" stroke="#1f8fd8" stroke-width="1.0"/><path d="M302.6,823 L302.6,882 M302.6,890 L302.6,947.2" fill="none" stroke="#8f8f8f" stroke-width="0.9"/><path d="M302.6,949.2 L301.40000000000003,946.7 L303.8,946.7Z" fill="#111"/><text x="302.5" y="887.5" font-size="3.9" text-anchor="middle" fill="#222" >Fortsetzen</text><rect x="273.4" y="949.2" width="58.30" height="29.70" rx="3" fill="#fff" stroke="#22a34e" stroke-width="1.0"/><text x="300.24999999999994" y="965.25" font-size="3.9" text-anchor="middle" fill="#111" >Antrag protokollieren</text><path d="M331.7,964 L340,964 Q342,964 342,962 L342,861.3 Q342,859.3 344,859.3 L350.3,859.3" fill="none" stroke="#8f8f8f" stroke-width="0.9"/><path d="M352.1,859.3 L349.1,857.8599999999999 L349.1,860.74Z" fill="#111"/><text x="362" y="916.5" font-size="3.9" text-anchor="middle" fill="#222" >Keine Antwort</text><rect x="352.1" y="844.2" width="58.50" height="29.30" rx="3" fill="#fff" stroke="#22a34e" stroke-width="1.0"/><text x="379.05" y="860.0500000000001" font-size="3.9" text-anchor="middle" fill="#111" >Antrag genehmigen</text><circle cx="356.1" cy="847.7" r="1.2" fill="#22a34e"/><path d="M354.1,851.2 Q356.1,848.4000000000001 358.1,851.2Z" fill="#22a34e"/><circle cx="381.2" cy="872.9" r="7" fill="#fff" stroke="#7fc0ea" stroke-width="0.8" stroke-dasharray="1 0.8"/><circle cx="381.2" cy="872.9" r="5" fill="#fff" stroke="#5aaee6" stroke-width="0.8"/><path d="M381.2,870 L381.2,873 L383.5,873" stroke="#5aaee6" stroke-width="0.6" fill="none"/><path d="M381.2,880 L381.2,947.2" fill="none" stroke="#8f8f8f" stroke-width="0.9"/><path d="M381.2,949.2 L380.0,946.7 L382.4,946.7Z" fill="#111"/><rect x="352.1" y="949.2" width="58.50" height="29.70" rx="3" fill="#fff" stroke="#22a34e" stroke-width="1.0"/><text x="379.05" y="965.25" font-size="3.9" text-anchor="middle" fill="#111" >Eskalations-Erinnerung</text><path d="M354.6,951.2 L358.6,951.2 L357.6,956.2 L353.6,956.2Z" fill="none" stroke="#5cc27c" stroke-width="0.6"/><path d="M381.5,978.9 L381.5,987.5" fill="none" stroke="#8f8f8f" stroke-width="0.9"/><path d="M381.5,989.3 L380.3,986.8 L382.7,986.8Z" fill="#111"/><circle cx="381.5" cy="996.3" r="7" fill="#fff" stroke="#1f8fd8" stroke-width="1.8"/><text x="381.5" y="1008.5" font-size="3.9" text-anchor="middle" fill="#222" >Eskalations-Erinne</text><text x="381.5" y="1014.5" font-size="3.9" text-anchor="middle" fill="#222" >rung erstellt</text><path d="M410.6,859.3 L423.3,859.3" fill="none" stroke="#8f8f8f" stroke-width="0.9"/><path d="M425.3,859.3 L422.3,857.8599999999999 L422.3,860.74Z" fill="#111"/><path d="M425.29999999999995,859.3 L432.4,852.1999999999999 L439.5,859.3 L432.4,866.4Z" fill="#fff" stroke="#e23a44" stroke-width="1.0"/><path d="M439.5,859.3 L500,859.3 M522,859.3 L586.3,859.3" fill="none" stroke="#8f8f8f" stroke-width="0.9"/><path d="M588.3,859.3 L585.3,857.8599999999999 L585.3,860.74Z" fill="#111"/><path d="M442,857.5 L446,861" fill="none" stroke="#333" stroke-width="0.6"/><text x="511" y="861" font-size="3.9" text-anchor="middle" fill="#222" >abgelehnt</text><path d="M432.4,866.4 L432.4,903.4 Q432.4,906.4 435.4,906.4 L438,906.4 M461,906.4 L463.3,906.4" fill="none" stroke="#8f8f8f" stroke-width="0.9"/><path d="M465.3,906.4 L462.3,904.9599999999999 L462.3,907.84Z" fill="#111"/><text x="450" y="908" font-size="3.9" text-anchor="middle" fill="#222" >genehmigt</text><rect x="465.3" y="892.2" width="57.40" height="29.30" rx="3" fill="#fff" stroke="#22a34e" stroke-width="1.0"/><text x="491.7" y="908.0500000000001" font-size="3.9" text-anchor="middle" fill="#111" >Antrag bearbeiten</text><circle cx="469.3" cy="895.7" r="1.2" fill="#22a34e"/><path d="M467.3,899.2 Q469.3,896.4000000000001 471.3,899.2Z" fill="#22a34e"/><circle cx="493.6" cy="919.9" r="7" fill="#fff" stroke="#7fc0ea" stroke-width="0.8" stroke-dasharray="1 0.8"/><circle cx="493.6" cy="919.9" r="5" fill="#fff" stroke="#5aaee6" stroke-width="0.8"/><path d="M493.6,917 L493.6,920 L495.9,920" stroke="#5aaee6" stroke-width="0.6" fill="none"/><path d="M493.6,927 L493.6,935 M493.6,942 L493.6,947.2" fill="none" stroke="#8f8f8f" stroke-width="0.9"/><path d="M493.6,949.2 L492.40000000000003,946.7 L494.8,946.7Z" fill="#111"/><text x="494" y="940.5" font-size="3.9" text-anchor="middle" fill="#222" >Keine Antwort</text><rect x="465.3" y="949.2" width="57.40" height="29.70" rx="3" fill="#fff" stroke="#22a34e" stroke-width="1.0"/><text x="491.7" y="965.25" font-size="3.9" text-anchor="middle" fill="#111" >Eskalations-Erinnerung</text><path d="M467.8,951.2 L471.8,951.2 L470.8,956.2 L466.8,956.2Z" fill="none" stroke="#5cc27c" stroke-width="0.6"/><path d="M493.8,978.9 L493.8,987.5" fill="none" stroke="#8f8f8f" stroke-width="0.9"/><path d="M493.8,989.3 L492.6,986.8 L495.0,986.8Z" fill="#111"/><circle cx="493.8" cy="996.3" r="7" fill="#fff" stroke="#1f8fd8" stroke-width="1.8"/><text x="493.8" y="1008.5" font-size="3.9" text-anchor="middle" fill="#222" >Eskalations-Erinne</text><text x="493.8" y="1014.5" font-size="3.9" text-anchor="middle" fill="#222" >rung erstellt</text><path d="M522.7,906.4 L535.2,906.4" fill="none" stroke="#8f8f8f" stroke-width="0.9"/><path d="M537.2,906.4 L534.2,904.9599999999999 L534.2,907.84Z" fill="#111"/><path d="M537.2,906.4 L544.5,899.1 L551.8,906.4 L544.5,913.6999999999999Z" fill="#fff" stroke="#e23a44" stroke-width="1.0"/><path d="M551.8,906.4 L558,906.4 M580,906.4 L586.3,906.4" fill="none" stroke="#8f8f8f" stroke-width="0.9"/><path d="M588.3,906.4 L585.3,904.9599999999999 L585.3,907.84Z" fill="#111"/><path d="M554,904.5 L558,908" fill="none" stroke="#333" stroke-width="0.6"/><text x="569" y="908" font-size="3.9" text-anchor="middle" fill="#222" >abgelehnt</text><path d="M544.5,913.7 L544.5,1004.4 Q544.5,1007.4 547.5,1007.4 L601,1007.4 M624,1007.4 L651.3,1007.4" fill="none" stroke="#8f8f8f" stroke-width="0.9"/><path d="M653.3,1007.4 L650.3,1005.9599999999999 L650.3,1008.84Z" fill="#111"/><text x="612.5" y="1009" font-size="3.9" text-anchor="middle" fill="#222" >genehmigt</text><rect x="588.3" y="844.2" width="57.10" height="29.10" rx="3" fill="#fff" stroke="#22a34e" stroke-width="1.0"/><text x="614.55" y="859.95" font-size="3.9" text-anchor="middle" fill="#111" >Ablehnung begründen</text><circle cx="592.3" cy="847.7" r="1.2" fill="#22a34e"/><path d="M590.3,851.2 Q592.3,848.4000000000001 594.3,851.2Z" fill="#22a34e"/><rect x="588.3" y="892.3" width="57.10" height="29.10" rx="3" fill="#fff" stroke="#22a34e" stroke-width="1.0"/><text x="614.55" y="908.05" font-size="3.9" text-anchor="middle" fill="#111" >Ablehnung begründen</text><circle cx="592.3" cy="895.8" r="1.2" fill="#22a34e"/><path d="M590.3,899.3 Q592.3,896.5 594.3,899.3Z" fill="#22a34e"/><path d="M645.4,859.3 L679.3,859.3 Q682.3,859.3 682.3,862.3 L682.3,897.2" fill="none" stroke="#8f8f8f" stroke-width="0.9"/><path d="M682.3,899.2 L681.0999999999999,896.7 L683.5,896.7Z" fill="#111"/><path d="M645.4,906.5 L673,906.5" fill="none" stroke="#8f8f8f" stroke-width="0.9"/><path d="M675,906.5 L672,905.06 L672,907.94Z" fill="#111"/><path d="M675.0,906.5 L682.3,899.2 L689.5999999999999,906.5 L682.3,913.8Z" fill="#fff" stroke="#e23a44" stroke-width="1.0"/><path d="M682.3,913.8 L682.3,944.3" fill="none" stroke="#8f8f8f" stroke-width="0.9"/><path d="M682.3,946.3 L681.0999999999999,943.8 L683.5,943.8Z" fill="#111"/><path d="M680.5,918 L684,921.5" fill="none" stroke="#333" stroke-width="0.6"/><rect x="653.3" y="946.3" width="58.30" height="29.10" rx="3" fill="#fff" stroke="#22a34e" stroke-width="1.0"/><text x="680.1500000000001" y="959.55" font-size="3.9" text-anchor="middle" fill="#111" >Antragsteller über</text><text x="680.1500000000001" y="965.1499999999999" font-size="3.9" text-anchor="middle" fill="#111" >Absage benachrichtigen</text><path d="M655.8,948.3 L659.8,948.3 L658.8,953.3 L654.8,953.3Z" fill="none" stroke="#5cc27c" stroke-width="0.6"/><rect x="653.3" y="993.2" width="58.30" height="28.90" rx="3" fill="#fff" stroke="#22a34e" stroke-width="1.0"/><text x="680.1500000000001" y="1006.3500000000001" font-size="3.9" text-anchor="middle" fill="#111" >Antragsteller über</text><text x="680.1500000000001" y="1011.95" font-size="3.9" text-anchor="middle" fill="#111" >Zusage benachrichtigen</text><path d="M655.8,995.2 L659.8,995.2 L658.8,1000.2 L654.8,1000.2Z" fill="none" stroke="#5cc27c" stroke-width="0.6"/><path d="M711.6,960.8 L733.5,960.8 Q736.5,960.8 736.5,963.8 L736.5,973" fill="none" stroke="#8f8f8f" stroke-width="0.9"/><path d="M736.5,975 L735.3,972.5 L737.7,972.5Z" fill="#111"/><path d="M711.6,1007.6 L733.5,1007.6 Q736.5,1007.6 736.5,1004.6 L736.5,991.6" fill="none" stroke="#8f8f8f" stroke-width="0.9"/><path d="M736.5,989.6 L735.3,992.1 L737.7,992.1Z" fill="#111"/><path d="M729.2,982.3 L736.5,975.0 L743.8,982.3 L736.5,989.5999999999999Z" fill="#fff" stroke="#e23a44" stroke-width="1.0"/><path d="M743.8,982.3 L774,982.3" fill="none" stroke="#8f8f8f" stroke-width="0.9"/><path d="M776,982.3 L773,980.8599999999999 L773,983.74Z" fill="#111"/><path d="M746,980.5 L750,984" fill="none" stroke="#333" stroke-width="0.6"/><circle cx="783.3" cy="982.3" r="7" fill="#fff" stroke="#1f8fd8" stroke-width="1.8"/></svg><div class="r" style="left:1061px;top:300px;width:851px;height:352px;background:#fff"></div><svg style="left:0;top:0" width="1920" height="1040"><path d="M1073.5,310 L1073.5,620" stroke="#e6e6e6" stroke-width="1" stroke-dasharray="2 2.5"/><path d="M1112.5,310 L1112.5,620" stroke="#e6e6e6" stroke-width="1" stroke-dasharray="2 2.5"/><path d="M1151.5,310 L1151.5,620" stroke="#e6e6e6" stroke-width="1" stroke-dasharray="2 2.5"/><path d="M1191.5,310 L1191.5,620" stroke="#e6e6e6" stroke-width="1" stroke-dasharray="2 2.5"/><path d="M1230.5,310 L1230.5,620" stroke="#e6e6e6" stroke-width="1" stroke-dasharray="2 2.5"/><path d="M1269.5,310 L1269.5,620" stroke="#e6e6e6" stroke-width="1" stroke-dasharray="2 2.5"/><path d="M1309.5,310 L1309.5,620" stroke="#e6e6e6" stroke-width="1" stroke-dasharray="2 2.5"/><path d="M1348.5,310 L1348.5,620" stroke="#e6e6e6" stroke-width="1" stroke-dasharray="2 2.5"/><path d="M1387.5,310 L1387.5,620" stroke="#e6e6e6" stroke-width="1" stroke-dasharray="2 2.5"/><path d="M1427.5,310 L1427.5,620" stroke="#e6e6e6" stroke-width="1" stroke-dasharray="2 2.5"/><path d="M1466.5,310 L1466.5,620" stroke="#e6e6e6" stroke-width="1" stroke-dasharray="2 2.5"/><path d="M1505.5,310 L1505.5,620" stroke="#e6e6e6" stroke-width="1" stroke-dasharray="2 2.5"/><path d="M1545.5,310 L1545.5,620" stroke="#e6e6e6" stroke-width="1" stroke-dasharray="2 2.5"/><path d="M1584.5,310 L1584.5,620" stroke="#e6e6e6" stroke-width="1" stroke-dasharray="2 2.5"/><path d="M1623.5,310 L1623.5,620" stroke="#e6e6e6" stroke-width="1" stroke-dasharray="2 2.5"/><path d="M1663.5,310 L1663.5,620" stroke="#e6e6e6" stroke-width="1" stroke-dasharray="2 2.5"/><path d="M1702.5,310 L1702.5,620" stroke="#e6e6e6" stroke-width="1" stroke-dasharray="2 2.5"/><path d="M1741.5,310 L1741.5,620" stroke="#e6e6e6" stroke-width="1" stroke-dasharray="2 2.5"/><path d="M1781.5,310 L1781.5,620" stroke="#e6e6e6" stroke-width="1" stroke-dasharray="2 2.5"/><path d="M1820.5,310 L1820.5,620" stroke="#e6e6e6" stroke-width="1" stroke-dasharray="2 2.5"/><path d="M1859.5,310 L1859.5,620" stroke="#e6e6e6" stroke-width="1" stroke-dasharray="2 2.5"/></svg><div class="t" style="left:1073.0px;top:311.97px;font-size:12.55px;color:#404040;font-weight:400;transform:scaleX(0.9479);transform-origin:0 0;-webkit-text-stroke:0">Antragsstellung</div><div class="t" style="left:1073.0px;top:348.37px;font-size:12.55px;color:#404040;font-weight:400;transform:scaleX(0.9479);transform-origin:0 0;-webkit-text-stroke:0">0</div><div class="t" style="left:1073.0px;top:387.07px;font-size:12.55px;color:#404040;font-weight:400;transform:scaleX(0.9479);transform-origin:0 0;-webkit-text-stroke:0">Antragsgenehmigung</div><div class="t" style="left:1073.0px;top:422.57px;font-size:12.55px;color:#404040;font-weight:400;transform:scaleX(0.9479);transform-origin:0 0;-webkit-text-stroke:0">0</div><div class="t" style="left:1073.0px;top:461.97px;font-size:12.55px;color:#404040;font-weight:400;transform:scaleX(0.9479);transform-origin:0 0;-webkit-text-stroke:0">Antragsbearbeitung</div><div class="t" style="left:1073.0px;top:537.07px;font-size:12.55px;color:#404040;font-weight:400;transform:scaleX(0.9479);transform-origin:0 0;-webkit-text-stroke:0">Rückmeldung</div><div class="t" style="left:1073.0px;top:572.57px;font-size:12.55px;color:#404040;font-weight:400;transform:scaleX(0.9479);transform-origin:0 0;-webkit-text-stroke:0">0</div><div class="r" style="left:1073px;top:491px;width:791px;height:31px;background:#ebebeb"></div><div class="r" style="left:1073px;top:487px;width:788px;height:3px;background:#90da50"></div><div class="r" style="left:1073px;top:492px;width:788px;height:26px;background:linear-gradient(#8dd24d 0%,#9fe350 35%,#acf452 78%,#9de24c 90%,#8fd54a 100%)"></div><div class="t" style="left:1464.4px;top:497.18px;font-size:11.60px;color:#222;font-weight:400;transform:scaleX(0.9479);transform-origin:0 0;-webkit-text-stroke:0">2</div><div class="r" style="left:1423px;top:629px;width:128px;height:22px;box-sizing:border-box;border:1px solid #000;background:#fff"></div><div class="r" style="left:1426px;top:635px;width:9px;height:9px;background:#5cc80c"></div><div class="t" style="left:1439.0px;top:633.99px;font-size:12.77px;color:#404040;font-weight:400;transform:scaleX(0.9479);transform-origin:0 0;-webkit-text-stroke:0">Antragsbearbeitung</div><div class="r" style="left:1061px;top:681px;width:832px;height:333px;background:#fff"></div><div class="t" style="left:1065.0px;top:686.79px;font-size:12.30px;color:#0a0a0a;font-weight:700;transform:scaleX(0.9620);transform-origin:0 0;">06.05.2014 16:31: Prozess veröffentlicht [KM]</div><div class="r" style="left:1061px;top:703px;width:832px;height:1px;background:#e4e4e4"></div><div class="t" style="left:1065.0px;top:709.79px;font-size:12.30px;color:#0a0a0a;font-weight:700;transform:scaleX(0.9620);transform-origin:0 0;">28.01.2014 17:44: Fachliches Modell gespeichert [KM]</div><div class="r" style="left:1061px;top:726px;width:832px;height:1px;background:#e4e4e4"></div><div class="t" style="left:1065.0px;top:732.79px;font-size:12.30px;color:#0a0a0a;font-weight:700;transform:scaleX(0.9620);transform-origin:0 0;">28.01.2014 10:46: Prozess veröffentlicht [BP]</div><div class="r" style="left:1061px;top:749px;width:832px;height:1px;background:#e4e4e4"></div><div class="t" style="left:1065.0px;top:755.79px;font-size:12.30px;color:#0a0a0a;font-weight:700;transform:scaleX(0.9620);transform-origin:0 0;">28.01.2014 10:45: Prozess importiert [BP]</div><div class="r" style="left:1061px;top:772px;width:832px;height:1px;background:#e4e4e4"></div><div class="t" style="left:1065.0px;top:778.79px;font-size:12.30px;color:#0a0a0a;font-weight:700;transform:scaleX(0.9620);transform-origin:0 0;">28.01.2014 10:45: Prozess erstellt [BP]</div><div class="r" style="left:1061px;top:795px;width:832px;height:1px;background:#e4e4e4"></div><div class="t" style="left:1065.0px;top:801.79px;font-size:12.30px;color:#0a0a0a;font-weight:700;transform:scaleX(0.9620);transform-origin:0 0;">28.01.2014 10:37: Prozess veröffentlicht [BP]</div><div class="r" style="left:1061px;top:818px;width:832px;height:1px;background:#e4e4e4"></div><div class="t" style="left:1065.0px;top:824.79px;font-size:12.30px;color:#0a0a0a;font-weight:700;transform:scaleX(0.9620);transform-origin:0 0;">28.01.2014 10:33: Technisches Modell gespeichert [BP]</div><div class="r" style="left:1061px;top:841px;width:832px;height:1px;background:#e4e4e4"></div><div class="t" style="left:1065.0px;top:847.79px;font-size:12.30px;color:#0a0a0a;font-weight:700;transform:scaleX(0.9620);transform-origin:0 0;">28.01.2014 10:22: Technisches Modell gespeichert [BP]</div><div class="t" style="left:1066.0px;top:864.11px;font-size:12.40px;color:#111;font-weight:400;transform:scaleX(0.9479);transform-origin:0 0;"> - 10:22 Technisches Modell gespeichert:</div><div class="r" style="left:1061px;top:880px;width:832px;height:1px;background:#e4e4e4"></div><div class="t" style="left:1065.0px;top:886.69px;font-size:12.30px;color:#0a0a0a;font-weight:700;transform:scaleX(0.9620);transform-origin:0 0;">28.01.2014 10:22: Technisches Modell gespeichert [BP]</div><div class="t" style="left:1066.0px;top:903.01px;font-size:12.40px;color:#111;font-weight:400;transform:scaleX(0.9479);transform-origin:0 0;"> - 10:22 Technisches Modell gespeichert:</div><div class="r" style="left:1061px;top:919px;width:832px;height:1px;background:#e4e4e4"></div><div class="t" style="left:1065.0px;top:925.59px;font-size:12.30px;color:#0a0a0a;font-weight:700;transform:scaleX(0.9620);transform-origin:0 0;">28.01.2014 10:22: Technisches Modell gespeichert [BP]</div><div class="t" style="left:1066.0px;top:941.91px;font-size:12.40px;color:#111;font-weight:400;transform:scaleX(0.9479);transform-origin:0 0;"> - 10:21 Technisches Modell gespeichert:</div><div class="r" style="left:1061px;top:958px;width:832px;height:1px;background:#e4e4e4"></div><div class="t" style="left:1065.0px;top:964.49px;font-size:12.30px;color:#0a0a0a;font-weight:700;transform:scaleX(0.9620);transform-origin:0 0;">28.01.2014 10:22: Technisches Modell gespeichert [BP]</div><div class="t" style="left:1066.0px;top:980.81px;font-size:12.40px;color:#111;font-weight:400;transform:scaleX(0.9479);transform-origin:0 0;"> - 10:20 Technisches Modell gespeichert:</div><div class="r" style="left:1061px;top:997px;width:832px;height:1px;background:#e4e4e4"></div><div class="r" style="left:1061px;top:998px;width:832px;height:16px;overflow:hidden"><div class="t" style="left:4px;top:4.8px;font-size:12.3px;transform:scaleX(0.962);transform-origin:0 0;font-weight:700;color:#0a0a0a">28.01.2014 10:21: Technisches Modell gespeichert [BP]</div></div><div class="r" style="left:1893px;top:681px;width:19px;height:333px;background:#f4f4f4;box-sizing:border-box;border:1px solid #e2e2e2"></div><div class="r" style="left:1893px;top:700px;width:19px;height:24px;background:#dcdcdc"></div><svg style="left:1893px;top:681px" width="19" height="333"><path d="M5.5,12 L9.5,8 L13.5,12" stroke="#c8c8c8" stroke-width="2" fill="none"/><path d="M5,27.5 L12.5,27.5 M5,31.5 L12.5,31.5 M5,35.5 L12.5,35.5" stroke="#b5b5b5" stroke-width="1.5"/><path d="M1,313.5 L18,313.5" stroke="#e2e2e2" stroke-width="1"/><path d="M5.5,321 L9.5,325 L13.5,321" stroke="#c8c8c8" stroke-width="2" fill="none"/></svg><div class="r" style="left:1061px;top:1014px;width:832px;height:19px;background:#f4f4f4;box-sizing:border-box;border:1px solid #e2e2e2"></div><div class="r" style="left:1080px;top:1015px;width:779px;height:17px;background:#dcdcdc"></div><svg style="left:1061px;top:1014px" width="832" height="19"><path d="M12,5.5 L8,9.5 L12,13.5" stroke="#c6c6c6" stroke-width="1.6" fill="none"/><path d="M404.5,5.5 L404.5,13.5 M408.5,5.5 L408.5,13.5 M412.5,5.5 L412.5,13.5" stroke="#b5b5b5" stroke-width="1.4"/><path d="M813.5,1 L813.5,18" stroke="#e2e2e2" stroke-width="1"/><path d="M822,5.5 L826,9.5 L822,13.5" stroke="#c6c6c6" stroke-width="1.6" fill="none"/></svg><div class="r" style="left:1893px;top:1014px;width:19px;height:19px;background:#f7f7f7"></div><svg style="left:0;top:0" width="1920" height="1040"><defs><radialGradient id="gearg" cx="0.4" cy="0.35" r="0.8"><stop offset="0" stop-color="#ececec"/><stop offset="0.6" stop-color="#bdbdbd"/><stop offset="1" stop-color="#979797"/></radialGradient><linearGradient id="boxg" x1="0" y1="0" x2="0" y2="1"><stop offset="0" stop-color="#d8d8d8"/><stop offset="1" stop-color="#8e8e8e"/></linearGradient><linearGradient id="blueg" x1="0" y1="0" x2="0" y2="1"><stop offset="0" stop-color="#7fb6e6"/><stop offset="1" stop-color="#2f78c2"/></linearGradient><linearGradient id="yelg" x1="0" y1="0" x2="0" y2="1"><stop offset="0" stop-color="#ffe066"/><stop offset="1" stop-color="#e0a800"/></linearGradient><linearGradient id="mong" x1="0" y1="0" x2="0" y2="1"><stop offset="0" stop-color="#2a2a2a"/><stop offset="1" stop-color="#7a7a7a"/></linearGradient></defs><path d="M27.20,139.16L27.43,138.24L28.57,138.24L28.80,139.16L29.80,139.57L30.61,139.08L31.42,139.89L30.93,140.70L31.34,141.70L32.26,141.93L32.26,143.07L31.34,143.30L30.93,144.30L31.42,145.11L30.61,145.92L29.80,145.43L28.80,145.84L28.57,146.76L27.43,146.76L27.20,145.84L26.20,145.43L25.39,145.92L24.58,145.11L25.07,144.30L24.66,143.30L23.74,143.07L23.74,141.93L24.66,141.70L25.07,140.70L24.58,139.89L25.39,139.08L26.20,139.57Z" fill="url(#gearg)" stroke="#8d8d8d" stroke-width="0.35"/><circle cx="28.00" cy="142.50" r="3.44" fill="url(#gearg)"/><circle cx="28.00" cy="142.50" r="2.06" fill="none" stroke="#3e93d3" stroke-width="0.86"/><circle cx="28.00" cy="142.50" r="1.29" fill="#fff" stroke="#9a9a9a" stroke-width="0.26"/><path d="M21.21,143.18L21.49,142.05L22.91,142.05L23.19,143.18L24.42,143.68L25.42,143.09L26.41,144.08L25.82,145.08L26.32,146.31L27.45,146.59L27.45,148.01L26.32,148.29L25.82,149.52L26.41,150.52L25.42,151.51L24.42,150.92L23.19,151.42L22.91,152.55L21.49,152.55L21.21,151.42L19.98,150.92L18.98,151.51L17.99,150.52L18.58,149.52L18.08,148.29L16.95,148.01L16.95,146.59L18.08,146.31L18.58,145.08L17.99,144.08L18.98,143.09L19.98,143.68Z" fill="url(#gearg)" stroke="#8d8d8d" stroke-width="0.35"/><circle cx="22.20" cy="147.30" r="4.24" fill="url(#gearg)"/><circle cx="22.20" cy="147.30" r="2.54" fill="none" stroke="#3e93d3" stroke-width="1.06"/><circle cx="22.20" cy="147.30" r="1.59" fill="#fff" stroke="#9a9a9a" stroke-width="0.32"/><circle cx="27.5" cy="148.5" r="4.1" fill="#2d9a2d" stroke="#1d6f1d" stroke-width="0.5"/><path d="M25.2,148.5 L29.8,148.5 M27.5,146.2 L27.5,150.8" stroke="#fff" stroke-width="1.4"/><path d="M19,164 L17,164 L17,176 L19,176 M30,164 L32,164 L32,176 L30,176" stroke="#333" stroke-width="1.2" fill="none"/><path d="M26.38,164.93L26.56,164.23L27.44,164.23L27.62,164.93L28.38,165.25L29.00,164.88L29.62,165.50L29.25,166.12L29.57,166.88L30.27,167.06L30.27,167.94L29.57,168.12L29.25,168.88L29.62,169.50L29.00,170.12L28.38,169.75L27.62,170.07L27.44,170.77L26.56,170.77L26.38,170.07L25.62,169.75L25.00,170.12L24.38,169.50L24.75,168.88L24.43,168.12L23.73,167.94L23.73,167.06L24.43,166.88L24.75,166.12L24.38,165.50L25.00,164.88L25.62,165.25Z" fill="url(#gearg)" stroke="#8d8d8d" stroke-width="0.35"/><circle cx="27.00" cy="167.50" r="2.64" fill="url(#gearg)"/><circle cx="27.00" cy="167.50" r="1.58" fill="none" stroke="#3e93d3" stroke-width="0.66"/><circle cx="27.00" cy="167.50" r="0.99" fill="#fff" stroke="#9a9a9a" stroke-width="0.20"/><path d="M22.29,168.54L22.49,167.73L23.51,167.73L23.71,168.54L24.59,168.91L25.31,168.48L26.02,169.19L25.59,169.91L25.96,170.79L26.77,170.99L26.77,172.01L25.96,172.21L25.59,173.09L26.02,173.81L25.31,174.52L24.59,174.09L23.71,174.46L23.51,175.27L22.49,175.27L22.29,174.46L21.41,174.09L20.69,174.52L19.98,173.81L20.41,173.09L20.04,172.21L19.23,172.01L19.23,170.99L20.04,170.79L20.41,169.91L19.98,169.19L20.69,168.48L21.41,168.91Z" fill="url(#gearg)" stroke="#8d8d8d" stroke-width="0.35"/><circle cx="23.00" cy="171.50" r="3.04" fill="url(#gearg)"/><circle cx="23.00" cy="171.50" r="1.82" fill="none" stroke="#3e93d3" stroke-width="0.76"/><circle cx="23.00" cy="171.50" r="1.14" fill="#fff" stroke="#9a9a9a" stroke-width="0.23"/><circle cx="27.5" cy="173.5" r="4.1" fill="#2d9a2d" stroke="#1d6f1d" stroke-width="0.5"/><path d="M25.2,173.5 L29.8,173.5 M27.5,171.2 L27.5,175.8" stroke="#fff" stroke-width="1.4"/><path d="M27.20,189.16L27.43,188.24L28.57,188.24L28.80,189.16L29.80,189.57L30.61,189.08L31.42,189.89L30.93,190.70L31.34,191.70L32.26,191.93L32.26,193.07L31.34,193.30L30.93,194.30L31.42,195.11L30.61,195.92L29.80,195.43L28.80,195.84L28.57,196.76L27.43,196.76L27.20,195.84L26.20,195.43L25.39,195.92L24.58,195.11L25.07,194.30L24.66,193.30L23.74,193.07L23.74,191.93L24.66,191.70L25.07,190.70L24.58,189.89L25.39,189.08L26.20,189.57Z" fill="url(#gearg)" stroke="#8d8d8d" stroke-width="0.35"/><circle cx="28.00" cy="192.50" r="3.44" fill="url(#gearg)"/><circle cx="28.00" cy="192.50" r="2.06" fill="none" stroke="#3e93d3" stroke-width="0.86"/><circle cx="28.00" cy="192.50" r="1.29" fill="#fff" stroke="#9a9a9a" stroke-width="0.26"/><path d="M21.21,193.18L21.49,192.05L22.91,192.05L23.19,193.18L24.42,193.68L25.42,193.09L26.41,194.08L25.82,195.08L26.32,196.31L27.45,196.59L27.45,198.01L26.32,198.29L25.82,199.52L26.41,200.52L25.42,201.51L24.42,200.92L23.19,201.42L22.91,202.55L21.49,202.55L21.21,201.42L19.98,200.92L18.98,201.51L17.99,200.52L18.58,199.52L18.08,198.29L16.95,198.01L16.95,196.59L18.08,196.31L18.58,195.08L17.99,194.08L18.98,193.09L19.98,193.68Z" fill="url(#gearg)" stroke="#8d8d8d" stroke-width="0.35"/><circle cx="22.20" cy="197.30" r="4.24" fill="url(#gearg)"/><circle cx="22.20" cy="197.30" r="2.54" fill="none" stroke="#3e93d3" stroke-width="1.06"/><circle cx="22.20" cy="197.30" r="1.59" fill="#fff" stroke="#9a9a9a" stroke-width="0.32"/><path d="M25.5,194 L31,193 L32,202 L25.5,202Z" fill="url(#yelg)" stroke="#b8902a" stroke-width="0.4"/><path d="M28.5,194 L28,202" stroke="#a07a20" stroke-width="0.5"/><path d="M27.20,214.16L27.43,213.24L28.57,213.24L28.80,214.16L29.80,214.57L30.61,214.08L31.42,214.89L30.93,215.70L31.34,216.70L32.26,216.93L32.26,218.07L31.34,218.30L30.93,219.30L31.42,220.11L30.61,220.92L29.80,220.43L28.80,220.84L28.57,221.76L27.43,221.76L27.20,220.84L26.20,220.43L25.39,220.92L24.58,220.11L25.07,219.30L24.66,218.30L23.74,218.07L23.74,216.93L24.66,216.70L25.07,215.70L24.58,214.89L25.39,214.08L26.20,214.57Z" fill="url(#gearg)" stroke="#8d8d8d" stroke-width="0.35"/><circle cx="28.00" cy="217.50" r="3.44" fill="url(#gearg)"/><circle cx="28.00" cy="217.50" r="2.06" fill="none" stroke="#3e93d3" stroke-width="0.86"/><circle cx="28.00" cy="217.50" r="1.29" fill="#fff" stroke="#9a9a9a" stroke-width="0.26"/><path d="M21.21,218.18L21.49,217.05L22.91,217.05L23.19,218.18L24.42,218.68L25.42,218.09L26.41,219.08L25.82,220.08L26.32,221.31L27.45,221.59L27.45,223.01L26.32,223.29L25.82,224.52L26.41,225.52L25.42,226.51L24.42,225.92L23.19,226.42L22.91,227.55L21.49,227.55L21.21,226.42L19.98,225.92L18.98,226.51L17.99,225.52L18.58,224.52L18.08,223.29L16.95,223.01L16.95,221.59L18.08,221.31L18.58,220.08L17.99,219.08L18.98,218.09L19.98,218.68Z" fill="url(#gearg)" stroke="#8d8d8d" stroke-width="0.35"/><circle cx="22.20" cy="222.30" r="4.24" fill="url(#gearg)"/><circle cx="22.20" cy="222.30" r="2.54" fill="none" stroke="#3e93d3" stroke-width="1.06"/><circle cx="22.20" cy="222.30" r="1.59" fill="#fff" stroke="#9a9a9a" stroke-width="0.32"/><path d="M21,222 L27,222" stroke="#2f8ad6" stroke-width="2"/><circle cx="28.3" cy="223.3" r="3.2" fill="none" stroke="#2f8ad6" stroke-width="2"/><rect x="17" y="238.5" width="14" height="14" rx="1" fill="url(#boxg)"/><rect x="18" y="241" width="6" height="10.5" fill="url(#blueg)"/><rect x="23.5" y="243" width="7.5" height="9" fill="#fff" stroke="#bbb" stroke-width="0.4"/><ellipse cx="27.3" cy="247.5" rx="3" ry="1.5" fill="#d42a2a"/><circle cx="27.3" cy="247.5" r="0.8" fill="#fff"/><path d="M21.97,264.15L22.27,262.84L23.73,262.84L24.03,264.15L25.33,264.62L26.39,263.81L27.52,264.76L26.91,265.95L27.60,267.14L28.94,267.21L29.19,268.65L27.96,269.17L27.72,270.53L28.70,271.44L27.96,272.71L26.69,272.32L25.63,273.21L25.80,274.53L24.42,275.04L23.69,273.91L22.31,273.91L21.58,275.04L20.20,274.53L20.37,273.21L19.31,272.32L18.04,272.71L17.30,271.44L18.28,270.53L18.04,269.17L16.81,268.65L17.06,267.21L18.40,267.14L19.09,265.95L18.48,264.76L19.61,263.81L20.67,264.62Z" fill="url(#gearg)" stroke="#8d8d8d" stroke-width="0.35"/><circle cx="23.00" cy="269.00" r="4.96" fill="url(#gearg)"/><circle cx="23.00" cy="269.00" r="1.86" fill="#fafafa" stroke="#9a9a9a" stroke-width="0.37"/><path d="M31.5,267 L26,273" stroke="#c98c2a" stroke-width="1.2"/><path d="M25,271.5 L28,274.5 L24,278 L21.5,275Z" fill="#dca450"/><rect x="17" y="323.5" width="14" height="10" rx="1" fill="url(#mong)" stroke="#888" stroke-width="0.5"/><rect x="22" y="334" width="4" height="2" fill="#999"/><rect x="20" y="336" width="8" height="1.4" fill="#aaa"/><path d="M24,328.5 L24,325 A3.5,3.5 0 0 1 27.5,328.5Z" fill="#2f88d8"/><path d="M24,328.5 L27.5,328.5 A3.5,3.5 0 0 1 24,332Z" fill="#f2b51c"/><path d="M24,328.5 L24,332 A3.5,3.5 0 0 1 24,325Z" fill="#56b23c"/><rect x="17" y="387" width="14.5" height="12" fill="#f4f4f4" stroke="#9aa" stroke-width="0.6"/><rect x="17" y="387" width="14.5" height="2.4" fill="#3e95dd"/><path d="M19,392 L24,392 M19,395 L22,395" stroke="#e5a43a" stroke-width="0.9"/><path d="M26.83,393.70L27.02,392.93L27.98,392.93L28.17,393.70L29.00,394.04L29.68,393.64L30.36,394.32L29.96,395.00L30.30,395.83L31.07,396.02L31.07,396.98L30.30,397.17L29.96,398.00L30.36,398.68L29.68,399.36L29.00,398.96L28.17,399.30L27.98,400.07L27.02,400.07L26.83,399.30L26.00,398.96L25.32,399.36L24.64,398.68L25.04,398.00L24.70,397.17L23.93,396.98L23.93,396.02L24.70,395.83L25.04,395.00L24.64,394.32L25.32,393.64L26.00,394.04Z" fill="url(#gearg)" stroke="#8d8d8d" stroke-width="0.35"/><circle cx="27.50" cy="396.50" r="2.88" fill="url(#gearg)"/><circle cx="27.50" cy="396.50" r="1.73" fill="none" stroke="#3e93d3" stroke-width="0.72"/><circle cx="27.50" cy="396.50" r="1.08" fill="#fff" stroke="#9a9a9a" stroke-width="0.22"/><rect x="18" y="411.5" width="10" height="13.5" rx="3" fill="url(#boxg)"/><path d="M18,416 Q23,418 28,416 M18,420 Q23,422 28,420" stroke="#eee" stroke-width="0.8" fill="none"/><path d="M27.33,418.70L27.52,417.93L28.48,417.93L28.67,418.70L29.50,419.04L30.18,418.64L30.86,419.32L30.46,420.00L30.80,420.83L31.57,421.02L31.57,421.98L30.80,422.17L30.46,423.00L30.86,423.68L30.18,424.36L29.50,423.96L28.67,424.30L28.48,425.07L27.52,425.07L27.33,424.30L26.50,423.96L25.82,424.36L25.14,423.68L25.54,423.00L25.20,422.17L24.43,421.98L24.43,421.02L25.20,420.83L25.54,420.00L25.14,419.32L25.82,418.64L26.50,419.04Z" fill="url(#gearg)" stroke="#8d8d8d" stroke-width="0.35"/><circle cx="28.00" cy="421.50" r="2.88" fill="url(#gearg)"/><circle cx="28.00" cy="421.50" r="1.73" fill="none" stroke="#3e93d3" stroke-width="0.72"/><circle cx="28.00" cy="421.50" r="1.08" fill="#fff" stroke="#9a9a9a" stroke-width="0.22"/><path d="M22.40,437.84L22.72,436.45L24.28,436.45L24.60,437.84L25.98,438.34L27.11,437.48L28.31,438.48L27.66,439.75L28.40,441.02L29.82,441.09L30.09,442.63L28.78,443.18L28.52,444.63L29.57,445.60L28.78,446.95L27.42,446.53L26.30,447.48L26.48,448.89L25.01,449.43L24.23,448.23L22.77,448.23L21.99,449.43L20.52,448.89L20.70,447.48L19.58,446.53L18.22,446.95L17.43,445.60L18.48,444.63L18.22,443.18L16.91,442.63L17.18,441.09L18.60,441.02L19.34,439.75L18.69,438.48L19.89,437.48L21.02,438.34Z" fill="url(#gearg)" stroke="#8d8d8d" stroke-width="0.35"/><circle cx="23.50" cy="443.00" r="5.28" fill="url(#gearg)"/><circle cx="23.5" cy="443" r="3.3" fill="#2f88d8"/><path d="M22.5,441 L25.5,443 L22.5,445Z" fill="#fff"/><path d="M27.37,444.36L27.55,443.63L28.45,443.63L28.63,444.36L29.42,444.68L30.06,444.30L30.70,444.94L30.32,445.58L30.64,446.37L31.37,446.55L31.37,447.45L30.64,447.63L30.32,448.42L30.70,449.06L30.06,449.70L29.42,449.32L28.63,449.64L28.45,450.37L27.55,450.37L27.37,449.64L26.58,449.32L25.94,449.70L25.30,449.06L25.68,448.42L25.36,447.63L24.63,447.45L24.63,446.55L25.36,446.37L25.68,445.58L25.30,444.94L25.94,444.30L26.58,444.68Z" fill="url(#gearg)" stroke="#8d8d8d" stroke-width="0.35"/><circle cx="28.00" cy="447.00" r="2.72" fill="url(#gearg)"/><circle cx="28.00" cy="447.00" r="1.63" fill="none" stroke="#3e93d3" stroke-width="0.68"/><circle cx="28.00" cy="447.00" r="1.02" fill="#fff" stroke="#9a9a9a" stroke-width="0.20"/><rect x="17.5" y="462" width="12.5" height="4" rx="1" fill="url(#boxg)"/><rect x="17.5" y="465.5" width="12.5" height="10" fill="url(#blueg)"/><rect x="21.5" y="468" width="4" height="1.2" fill="#dde"/><path d="M27.33,468.70L27.52,467.93L28.48,467.93L28.67,468.70L29.50,469.04L30.18,468.64L30.86,469.32L30.46,470.00L30.80,470.83L31.57,471.02L31.57,471.98L30.80,472.17L30.46,473.00L30.86,473.68L30.18,474.36L29.50,473.96L28.67,474.30L28.48,475.07L27.52,475.07L27.33,474.30L26.50,473.96L25.82,474.36L25.14,473.68L25.54,473.00L25.20,472.17L24.43,471.98L24.43,471.02L25.20,470.83L25.54,470.00L25.14,469.32L25.82,468.64L26.50,469.04Z" fill="url(#gearg)" stroke="#8d8d8d" stroke-width="0.35"/><circle cx="28.00" cy="471.50" r="2.88" fill="url(#gearg)"/><circle cx="28.00" cy="471.50" r="1.73" fill="none" stroke="#3e93d3" stroke-width="0.72"/><circle cx="28.00" cy="471.50" r="1.08" fill="#fff" stroke="#9a9a9a" stroke-width="0.22"/><path d="M27.20,487.16L27.43,486.24L28.57,486.24L28.80,487.16L29.80,487.57L30.61,487.08L31.42,487.89L30.93,488.70L31.34,489.70L32.26,489.93L32.26,491.07L31.34,491.30L30.93,492.30L31.42,493.11L30.61,493.92L29.80,493.43L28.80,493.84L28.57,494.76L27.43,494.76L27.20,493.84L26.20,493.43L25.39,493.92L24.58,493.11L25.07,492.30L24.66,491.30L23.74,491.07L23.74,489.93L24.66,489.70L25.07,488.70L24.58,487.89L25.39,487.08L26.20,487.57Z" fill="url(#gearg)" stroke="#8d8d8d" stroke-width="0.35"/><circle cx="28.00" cy="490.50" r="3.44" fill="url(#gearg)"/><circle cx="28.00" cy="490.50" r="2.06" fill="none" stroke="#3e93d3" stroke-width="0.86"/><circle cx="28.00" cy="490.50" r="1.29" fill="#fff" stroke="#9a9a9a" stroke-width="0.26"/><path d="M21.21,491.18L21.49,490.05L22.91,490.05L23.19,491.18L24.42,491.68L25.42,491.09L26.41,492.08L25.82,493.08L26.32,494.31L27.45,494.59L27.45,496.01L26.32,496.29L25.82,497.52L26.41,498.52L25.42,499.51L24.42,498.92L23.19,499.42L22.91,500.55L21.49,500.55L21.21,499.42L19.98,498.92L18.98,499.51L17.99,498.52L18.58,497.52L18.08,496.29L16.95,496.01L16.95,494.59L18.08,494.31L18.58,493.08L17.99,492.08L18.98,491.09L19.98,491.68Z" fill="url(#gearg)" stroke="#8d8d8d" stroke-width="0.35"/><circle cx="22.20" cy="495.30" r="4.24" fill="url(#gearg)"/><circle cx="22.20" cy="495.30" r="2.54" fill="none" stroke="#3e93d3" stroke-width="1.06"/><circle cx="22.20" cy="495.30" r="1.59" fill="#fff" stroke="#9a9a9a" stroke-width="0.32"/><path d="M22,494 L32,494 M22,496.5 L32,496.5 M23,499 L32,499" stroke="#4aa3e0" stroke-width="1.3"/><path d="M27.20,512.16L27.43,511.24L28.57,511.24L28.80,512.16L29.80,512.57L30.61,512.08L31.42,512.89L30.93,513.70L31.34,514.70L32.26,514.93L32.26,516.07L31.34,516.30L30.93,517.30L31.42,518.11L30.61,518.92L29.80,518.43L28.80,518.84L28.57,519.76L27.43,519.76L27.20,518.84L26.20,518.43L25.39,518.92L24.58,518.11L25.07,517.30L24.66,516.30L23.74,516.07L23.74,514.93L24.66,514.70L25.07,513.70L24.58,512.89L25.39,512.08L26.20,512.57Z" fill="url(#gearg)" stroke="#8d8d8d" stroke-width="0.35"/><circle cx="28.00" cy="515.50" r="3.44" fill="url(#gearg)"/><circle cx="28.00" cy="515.50" r="2.06" fill="none" stroke="#3e93d3" stroke-width="0.86"/><circle cx="28.00" cy="515.50" r="1.29" fill="#fff" stroke="#9a9a9a" stroke-width="0.26"/><path d="M21.21,516.18L21.49,515.05L22.91,515.05L23.19,516.18L24.42,516.68L25.42,516.09L26.41,517.08L25.82,518.08L26.32,519.31L27.45,519.59L27.45,521.01L26.32,521.29L25.82,522.52L26.41,523.52L25.42,524.51L24.42,523.92L23.19,524.42L22.91,525.55L21.49,525.55L21.21,524.42L19.98,523.92L18.98,524.51L17.99,523.52L18.58,522.52L18.08,521.29L16.95,521.01L16.95,519.59L18.08,519.31L18.58,518.08L17.99,517.08L18.98,516.09L19.98,516.68Z" fill="url(#gearg)" stroke="#8d8d8d" stroke-width="0.35"/><circle cx="22.20" cy="520.30" r="4.24" fill="url(#gearg)"/><circle cx="22.20" cy="520.30" r="2.54" fill="none" stroke="#3e93d3" stroke-width="1.06"/><circle cx="22.20" cy="520.30" r="1.59" fill="#fff" stroke="#9a9a9a" stroke-width="0.32"/><circle cx="27.5" cy="521" r="4.2" fill="#f6f6f6" stroke="#999" stroke-width="0.8"/><path d="M27.5,518.5 L27.5,521 L29,522" stroke="#c33" stroke-width="0.6" fill="none"/><rect x="16.5" y="536.5" width="15" height="11" rx="1" fill="url(#mong)" stroke="#999" stroke-width="0.7"/><rect x="22" y="547.5" width="4" height="1.8" fill="#aaa"/><rect x="19.5" y="549.2" width="9" height="1.5" fill="#bbb"/><path d="M25.51,537.98L25.65,537.42L26.35,537.42L26.49,537.98L27.09,538.23L27.58,537.93L28.07,538.42L27.77,538.91L28.02,539.51L28.58,539.65L28.58,540.35L28.02,540.49L27.77,541.09L28.07,541.58L27.58,542.07L27.09,541.77L26.49,542.02L26.35,542.58L25.65,542.58L25.51,542.02L24.91,541.77L24.42,542.07L23.93,541.58L24.23,541.09L23.98,540.49L23.42,540.35L23.42,539.65L23.98,539.51L24.23,538.91L23.93,538.42L24.42,537.93L24.91,538.23Z" fill="#5a6f80" stroke="#8ab" stroke-width="0.35"/><circle cx="26.00" cy="540.00" r="2.08" fill="#5a6f80"/><circle cx="26.00" cy="540.00" r="1.25" fill="none" stroke="#3e93d3" stroke-width="0.52"/><path d="M21.48,541.32L21.63,540.72L22.37,540.72L22.52,541.32L23.17,541.59L23.70,541.27L24.23,541.80L23.91,542.33L24.18,542.98L24.78,543.13L24.78,543.87L24.18,544.02L23.91,544.67L24.23,545.20L23.70,545.73L23.17,545.41L22.52,545.68L22.37,546.28L21.63,546.28L21.48,545.68L20.83,545.41L20.30,545.73L19.77,545.20L20.09,544.67L19.82,544.02L19.22,543.87L19.22,543.13L19.82,542.98L20.09,542.33L19.77,541.80L20.30,541.27L20.83,541.59Z" fill="#5a6f80" stroke="#8ab" stroke-width="0.35"/><circle cx="22.00" cy="543.50" r="2.24" fill="#5a6f80"/><circle cx="22.00" cy="543.50" r="1.34" fill="none" stroke="#3e93d3" stroke-width="0.56"/><path d="M235.82,143.15L236.45,140.39L239.55,140.39L240.18,143.15L242.92,144.15L245.17,142.44L247.55,144.43L246.26,146.95L247.72,149.47L250.54,149.61L251.08,152.67L248.47,153.77L247.97,156.64L250.04,158.56L248.49,161.25L245.79,160.41L243.55,162.29L243.91,165.09L240.99,166.15L239.46,163.78L236.54,163.78L235.01,166.15L232.09,165.09L232.45,162.29L230.21,160.41L227.51,161.25L225.96,158.56L228.03,156.64L227.53,153.77L224.92,152.67L225.46,149.61L228.28,149.47L229.74,146.95L228.45,144.43L230.83,142.44L233.08,144.15Z" fill="url(#gearg)" stroke="#8d8d8d" stroke-width="0.66"/><circle cx="238.00" cy="153.40" r="10.48" fill="url(#gearg)"/><circle cx="238.00" cy="153.40" r="6.29" fill="none" stroke="#3e93d3" stroke-width="2.62"/><circle cx="238.00" cy="153.40" r="3.93" fill="#fff" stroke="#9a9a9a" stroke-width="0.79"/><path d="M218.69,160.11L219.44,156.81L223.16,156.81L223.91,160.11L227.20,161.31L229.90,159.26L232.74,161.65L231.20,164.67L232.95,167.69L236.33,167.86L236.98,171.52L233.85,172.84L233.25,176.28L235.73,178.58L233.87,181.80L230.63,180.80L227.96,183.05L228.38,186.41L224.89,187.69L223.05,184.84L219.55,184.84L217.71,187.69L214.22,186.41L214.64,183.05L211.97,180.80L208.73,181.80L206.87,178.58L209.35,176.28L208.75,172.84L205.62,171.52L206.27,167.86L209.65,167.69L211.40,164.67L209.86,161.65L212.70,159.26L215.40,161.31Z" fill="url(#gearg)" stroke="#8d8d8d" stroke-width="0.79"/><circle cx="221.30" cy="172.40" r="12.56" fill="url(#gearg)"/><circle cx="221.30" cy="172.40" r="7.54" fill="none" stroke="#3e93d3" stroke-width="3.14"/><circle cx="221.30" cy="172.40" r="4.71" fill="#fff" stroke="#9a9a9a" stroke-width="0.94"/><g transform="translate(1333.5,139) scale(1.0)"><path d="M20.79,2.94L21.13,1.56L22.87,1.56L23.21,2.94L24.72,3.57L25.94,2.83L27.17,4.06L26.43,5.28L27.06,6.79L28.44,7.13L28.44,8.87L27.06,9.21L26.43,10.72L27.17,11.94L25.94,13.17L24.72,12.43L23.21,13.06L22.87,14.44L21.13,14.44L20.79,13.06L19.28,12.43L18.06,13.17L16.83,11.94L17.57,10.72L16.94,9.21L15.56,8.87L15.56,7.13L16.94,6.79L17.57,5.28L16.83,4.06L18.06,2.83L19.28,3.57Z" fill="url(#gearg)" stroke="#8d8d8d" stroke-width="0.35"/><circle cx="22.00" cy="8.00" r="5.20" fill="url(#gearg)"/><circle cx="22.00" cy="8.00" r="3.12" fill="none" stroke="#3e93d3" stroke-width="1.30"/><circle cx="22.00" cy="8.00" r="1.95" fill="#fff" stroke="#9a9a9a" stroke-width="0.39"/><path d="M11.69,9.55L12.07,8.06L13.93,8.06L14.31,9.55L15.93,10.23L17.25,9.44L18.56,10.75L17.77,12.07L18.45,13.69L19.94,14.07L19.94,15.93L18.45,16.31L17.77,17.93L18.56,19.25L17.25,20.56L15.93,19.77L14.31,20.45L13.93,21.94L12.07,21.94L11.69,20.45L10.07,19.77L8.75,20.56L7.44,19.25L8.23,17.93L7.55,16.31L6.06,15.93L6.06,14.07L7.55,13.69L8.23,12.07L7.44,10.75L8.75,9.44L10.07,10.23Z" fill="url(#gearg)" stroke="#8d8d8d" stroke-width="0.35"/><circle cx="13.00" cy="15.00" r="5.60" fill="url(#gearg)"/><circle cx="13.00" cy="15.00" r="3.36" fill="none" stroke="#3e93d3" stroke-width="1.40"/><circle cx="13.00" cy="15.00" r="2.10" fill="#fff" stroke="#9a9a9a" stroke-width="0.42"/><path d="M1,23 L4,22 Q9,20 14,23 L18,25 L15,27 L4,26 L1,27Z" fill="#f3c7a8" stroke="#c99" stroke-width="0.5"/><rect x="0" y="21.5" width="2.5" height="6" fill="#333"/><path d="M21,13 L32,31 L10,31Z" fill="url(#yelg)" stroke="#c49000" stroke-width="0.8"/><path d="M21,18.5 L21,25.5" stroke="#222" stroke-width="2"/><circle cx="21" cy="28.3" r="1.1" fill="#222"/></g><g transform="translate(280,79) scale(0.5)"><path d="M20.79,2.94L21.13,1.56L22.87,1.56L23.21,2.94L24.72,3.57L25.94,2.83L27.17,4.06L26.43,5.28L27.06,6.79L28.44,7.13L28.44,8.87L27.06,9.21L26.43,10.72L27.17,11.94L25.94,13.17L24.72,12.43L23.21,13.06L22.87,14.44L21.13,14.44L20.79,13.06L19.28,12.43L18.06,13.17L16.83,11.94L17.57,10.72L16.94,9.21L15.56,8.87L15.56,7.13L16.94,6.79L17.57,5.28L16.83,4.06L18.06,2.83L19.28,3.57Z" fill="url(#gearg)" stroke="#8d8d8d" stroke-width="0.35"/><circle cx="22.00" cy="8.00" r="5.20" fill="url(#gearg)"/><circle cx="22.00" cy="8.00" r="3.12" fill="none" stroke="#3e93d3" stroke-width="1.30"/><circle cx="22.00" cy="8.00" r="1.95" fill="#fff" stroke="#9a9a9a" stroke-width="0.39"/><path d="M11.69,9.55L12.07,8.06L13.93,8.06L14.31,9.55L15.93,10.23L17.25,9.44L18.56,10.75L17.77,12.07L18.45,13.69L19.94,14.07L19.94,15.93L18.45,16.31L17.77,17.93L18.56,19.25L17.25,20.56L15.93,19.77L14.31,20.45L13.93,21.94L12.07,21.94L11.69,20.45L10.07,19.77L8.75,20.56L7.44,19.25L8.23,17.93L7.55,16.31L6.06,15.93L6.06,14.07L7.55,13.69L8.23,12.07L7.44,10.75L8.75,9.44L10.07,10.23Z" fill="url(#gearg)" stroke="#8d8d8d" stroke-width="0.35"/><circle cx="13.00" cy="15.00" r="5.60" fill="url(#gearg)"/><circle cx="13.00" cy="15.00" r="3.36" fill="none" stroke="#3e93d3" stroke-width="1.40"/><circle cx="13.00" cy="15.00" r="2.10" fill="#fff" stroke="#9a9a9a" stroke-width="0.42"/><path d="M1,23 L4,22 Q9,20 14,23 L18,25 L15,27 L4,26 L1,27Z" fill="#f3c7a8" stroke="#c99" stroke-width="0.5"/><rect x="0" y="21.5" width="2.5" height="6" fill="#333"/><path d="M21,13 L32,31 L10,31Z" fill="url(#yelg)" stroke="#c49000" stroke-width="0.8"/><path d="M21,18.5 L21,25.5" stroke="#222" stroke-width="2"/><circle cx="21" cy="28.3" r="1.1" fill="#222"/></g><path d="M260,112.8 Q268,104.8 276,112.8" fill="none" stroke="#ec9a9a" stroke-width="1.7"/><path d="M260,115.3 Q268,123.3 276,115.3" fill="none" stroke="#ec9a9a" stroke-width="1.7"/><circle cx="268.2" cy="113.8" r="4.1" fill="#6b9fd9"/><circle cx="268.2" cy="113.6" r="2.1" fill="#0a0a0a"/><path d="M268.6,112 L268.6,113.4" stroke="#ccc" stroke-width="0.5"/><path d="M213.29,243.54L213.49,242.73L214.51,242.73L214.71,243.54L215.59,243.91L216.31,243.48L217.02,244.19L216.59,244.91L216.96,245.79L217.77,245.99L217.77,247.01L216.96,247.21L216.59,248.09L217.02,248.81L216.31,249.52L215.59,249.09L214.71,249.46L214.51,250.27L213.49,250.27L213.29,249.46L212.41,249.09L211.69,249.52L210.98,248.81L211.41,248.09L211.04,247.21L210.23,247.01L210.23,245.99L211.04,245.79L211.41,244.91L210.98,244.19L211.69,243.48L212.41,243.91Z" fill="url(#gearg)" stroke="#8d8d8d" stroke-width="0.35"/><circle cx="214.00" cy="246.50" r="3.04" fill="url(#gearg)"/><circle cx="214.00" cy="246.50" r="1.82" fill="none" stroke="#3e93d3" stroke-width="0.76"/><circle cx="214.00" cy="246.50" r="1.14" fill="#fff" stroke="#9a9a9a" stroke-width="0.23"/><path d="M206.64,247.92L206.89,246.94L208.11,246.94L208.36,247.92L209.42,248.36L210.29,247.84L211.16,248.71L210.64,249.58L211.08,250.64L212.06,250.89L212.06,252.11L211.08,252.36L210.64,253.42L211.16,254.29L210.29,255.16L209.42,254.64L208.36,255.08L208.11,256.06L206.89,256.06L206.64,255.08L205.58,254.64L204.71,255.16L203.84,254.29L204.36,253.42L203.92,252.36L202.94,252.11L202.94,250.89L203.92,250.64L204.36,249.58L203.84,248.71L204.71,247.84L205.58,248.36Z" fill="url(#gearg)" stroke="#8d8d8d" stroke-width="0.35"/><circle cx="207.50" cy="251.50" r="3.68" fill="url(#gearg)"/><circle cx="207.50" cy="251.50" r="2.21" fill="none" stroke="#3e93d3" stroke-width="0.92"/><circle cx="207.50" cy="251.50" r="1.38" fill="#fff" stroke="#9a9a9a" stroke-width="0.28"/><rect x="209.3" y="249.5" width="8.8" height="8.6" rx="0.6" fill="#2b3138"/><rect x="211.2" y="249.5" width="4.8" height="2.4" fill="#9aa"/><rect x="210.6" y="254" width="6.2" height="4.1" fill="#f4f6f8"/><rect x="210.6" y="257" width="6.2" height="1.1" fill="#6cc0ee"/><path d="M225.8,250.8 L231,250.8 L228.4,253.6Z" fill="#111"/><path d="M240.5,254 Q245.5,252 250.5,254 L253.5,255.5 L250.5,257 L240.5,256.5Z" fill="#f2b48c" stroke="#d59" stroke-width="0.3"/><rect x="239.5" y="253" width="2" height="5" fill="#222"/><path d="M250.83,243.20L251.02,242.43L251.98,242.43L252.17,243.20L253.00,243.54L253.68,243.14L254.36,243.82L253.96,244.50L254.30,245.33L255.07,245.52L255.07,246.48L254.30,246.67L253.96,247.50L254.36,248.18L253.68,248.86L253.00,248.46L252.17,248.80L251.98,249.57L251.02,249.57L250.83,248.80L250.00,248.46L249.32,248.86L248.64,248.18L249.04,247.50L248.70,246.67L247.93,246.48L247.93,245.52L248.70,245.33L249.04,244.50L248.64,243.82L249.32,243.14L250.00,243.54Z" fill="url(#gearg)" stroke="#8d8d8d" stroke-width="0.35"/><circle cx="251.50" cy="246.00" r="2.88" fill="url(#gearg)"/><circle cx="251.50" cy="246.00" r="1.73" fill="none" stroke="#3e93d3" stroke-width="0.72"/><circle cx="251.50" cy="246.00" r="1.08" fill="#fff" stroke="#9a9a9a" stroke-width="0.22"/><path d="M245.83,247.20L246.02,246.43L246.98,246.43L247.17,247.20L248.00,247.54L248.68,247.14L249.36,247.82L248.96,248.50L249.30,249.33L250.07,249.52L250.07,250.48L249.30,250.67L248.96,251.50L249.36,252.18L248.68,252.86L248.00,252.46L247.17,252.80L246.98,253.57L246.02,253.57L245.83,252.80L245.00,252.46L244.32,252.86L243.64,252.18L244.04,251.50L243.70,250.67L242.93,250.48L242.93,249.52L243.70,249.33L244.04,248.50L243.64,247.82L244.32,247.14L245.00,247.54Z" fill="url(#gearg)" stroke="#8d8d8d" stroke-width="0.35"/><circle cx="246.50" cy="250.00" r="2.88" fill="url(#gearg)"/><circle cx="246.50" cy="250.00" r="1.73" fill="none" stroke="#3e93d3" stroke-width="0.72"/><circle cx="246.50" cy="250.00" r="1.08" fill="#fff" stroke="#9a9a9a" stroke-width="0.22"/><path d="M269,254 Q274,252 279,254 L282,255.5 L279,257 L269,256.5Z" fill="#f2b48c" stroke="#d59" stroke-width="0.3"/><rect x="268" y="253" width="2" height="5" fill="#222"/><path d="M279.33,243.20L279.52,242.43L280.48,242.43L280.67,243.20L281.50,243.54L282.18,243.14L282.86,243.82L282.46,244.50L282.80,245.33L283.57,245.52L283.57,246.48L282.80,246.67L282.46,247.50L282.86,248.18L282.18,248.86L281.50,248.46L280.67,248.80L280.48,249.57L279.52,249.57L279.33,248.80L278.50,248.46L277.82,248.86L277.14,248.18L277.54,247.50L277.20,246.67L276.43,246.48L276.43,245.52L277.20,245.33L277.54,244.50L277.14,243.82L277.82,243.14L278.50,243.54Z" fill="url(#gearg)" stroke="#8d8d8d" stroke-width="0.35"/><circle cx="280.00" cy="246.00" r="2.88" fill="url(#gearg)"/><circle cx="280.00" cy="246.00" r="1.73" fill="none" stroke="#3e93d3" stroke-width="0.72"/><circle cx="280.00" cy="246.00" r="1.08" fill="#fff" stroke="#9a9a9a" stroke-width="0.22"/><path d="M274.83,247.20L275.02,246.43L275.98,246.43L276.17,247.20L277.00,247.54L277.68,247.14L278.36,247.82L277.96,248.50L278.30,249.33L279.07,249.52L279.07,250.48L278.30,250.67L277.96,251.50L278.36,252.18L277.68,252.86L277.00,252.46L276.17,252.80L275.98,253.57L275.02,253.57L274.83,252.80L274.00,252.46L273.32,252.86L272.64,252.18L273.04,251.50L272.70,250.67L271.93,250.48L271.93,249.52L272.70,249.33L273.04,248.50L272.64,247.82L273.32,247.14L274.00,247.54Z" fill="url(#gearg)" stroke="#8d8d8d" stroke-width="0.35"/><circle cx="275.50" cy="250.00" r="2.88" fill="url(#gearg)"/><circle cx="275.50" cy="250.00" r="1.73" fill="none" stroke="#3e93d3" stroke-width="0.72"/><circle cx="275.50" cy="250.00" r="1.08" fill="#fff" stroke="#9a9a9a" stroke-width="0.22"/><path d="M276.5,250 L283.5,257 M283.5,250 L276.5,257" stroke="#e5502e" stroke-width="2.2"/><rect x="290" y="241" width="1" height="21" fill="#e4e4e4"/><g opacity="0.55"><path d="M303.54,246.46L303.81,245.24L305.19,245.24L305.46,246.46L306.68,246.90L307.68,246.15L308.73,247.03L308.16,248.14L308.80,249.26L310.05,249.32L310.29,250.68L309.14,251.16L308.91,252.43L309.83,253.28L309.14,254.47L307.95,254.10L306.96,254.93L307.12,256.18L305.82,256.65L305.15,255.59L303.85,255.59L303.18,256.65L301.88,256.18L302.04,254.93L301.05,254.10L299.86,254.47L299.17,253.28L300.09,252.43L299.86,251.16L298.71,250.68L298.95,249.32L300.20,249.26L300.84,248.14L300.27,247.03L301.32,246.15L302.32,246.90Z" fill="#e3c9c9" stroke="#d8b0b0" stroke-width="0.35"/><circle cx="304.50" cy="251.00" r="4.64" fill="#e3c9c9"/><circle cx="304.50" cy="251.00" r="2.78" fill="none" stroke="#e7a0a0" stroke-width="1.16"/><circle cx="304.50" cy="251.00" r="1.74" fill="#fff" stroke="#9a9a9a" stroke-width="0.35"/><path d="M307,248 L311,244" stroke="#999" stroke-width="1"/><circle cx="311.5" cy="243.5" r="2.2" fill="#999"/></g><path d="M325,243 L333,243 L337,247 L337,257 L325,257Z" fill="#f4f4f4" stroke="#aaa" stroke-width="0.6"/><path d="M327.5,247 L326.3,248.2 L327.5,249.4 M331.5,247 L332.7,248.2 L331.5,249.4 M330.5,246.5 L328.7,250" stroke="#d22" stroke-width="0.9" fill="none"/><path d="M330,253 L333,257 L340,248" stroke="#5ab82a" stroke-width="2.3" fill="none"/><rect x="347" y="241" width="1" height="21" fill="#e4e4e4"/><path d="M356,244 L368,256 M368,244 L356,256" stroke="#1a1a1a" stroke-width="2.6" stroke-linecap="round"/><rect x="376" y="241" width="1" height="21" fill="#e4e4e4"/><path d="M393.29,243.54L393.49,242.73L394.51,242.73L394.71,243.54L395.59,243.91L396.31,243.48L397.02,244.19L396.59,244.91L396.96,245.79L397.77,245.99L397.77,247.01L396.96,247.21L396.59,248.09L397.02,248.81L396.31,249.52L395.59,249.09L394.71,249.46L394.51,250.27L393.49,250.27L393.29,249.46L392.41,249.09L391.69,249.52L390.98,248.81L391.41,248.09L391.04,247.21L390.23,247.01L390.23,245.99L391.04,245.79L391.41,244.91L390.98,244.19L391.69,243.48L392.41,243.91Z" fill="url(#gearg)" stroke="#8d8d8d" stroke-width="0.35"/><circle cx="394.00" cy="246.50" r="3.04" fill="url(#gearg)"/><circle cx="394.00" cy="246.50" r="1.82" fill="none" stroke="#3e93d3" stroke-width="0.76"/><circle cx="394.00" cy="246.50" r="1.14" fill="#fff" stroke="#9a9a9a" stroke-width="0.23"/><path d="M387.14,247.92L387.39,246.94L388.61,246.94L388.86,247.92L389.92,248.36L390.79,247.84L391.66,248.71L391.14,249.58L391.58,250.64L392.56,250.89L392.56,252.11L391.58,252.36L391.14,253.42L391.66,254.29L390.79,255.16L389.92,254.64L388.86,255.08L388.61,256.06L387.39,256.06L387.14,255.08L386.08,254.64L385.21,255.16L384.34,254.29L384.86,253.42L384.42,252.36L383.44,252.11L383.44,250.89L384.42,250.64L384.86,249.58L384.34,248.71L385.21,247.84L386.08,248.36Z" fill="url(#gearg)" stroke="#8d8d8d" stroke-width="0.35"/><circle cx="388.00" cy="251.50" r="3.68" fill="url(#gearg)"/><circle cx="388.00" cy="251.50" r="2.21" fill="none" stroke="#3e93d3" stroke-width="0.92"/><circle cx="388.00" cy="251.50" r="1.38" fill="#fff" stroke="#9a9a9a" stroke-width="0.28"/><path d="M398.5,251.5 A4,4 0 1 0 398.5,256" stroke="#1f86d8" stroke-width="2.2" fill="none"/><path d="M406.5,250.8 L411.5,250.8 L409,253.6Z" fill="#111"/><path d="M424,243 L432,243 L436,247 L436,258 L424,258Z" fill="#f2f2f2" stroke="#aaa" stroke-width="0.6"/><rect x="421" y="245" width="10" height="9" fill="#2b5bb5" stroke="#1b3f88" stroke-width="0.5"/><path d="M422.8,247 L424,252 L426,248.5 L428,252 L429.2,247" stroke="#fff" stroke-width="0.9" fill="none"/></svg></body></html>
